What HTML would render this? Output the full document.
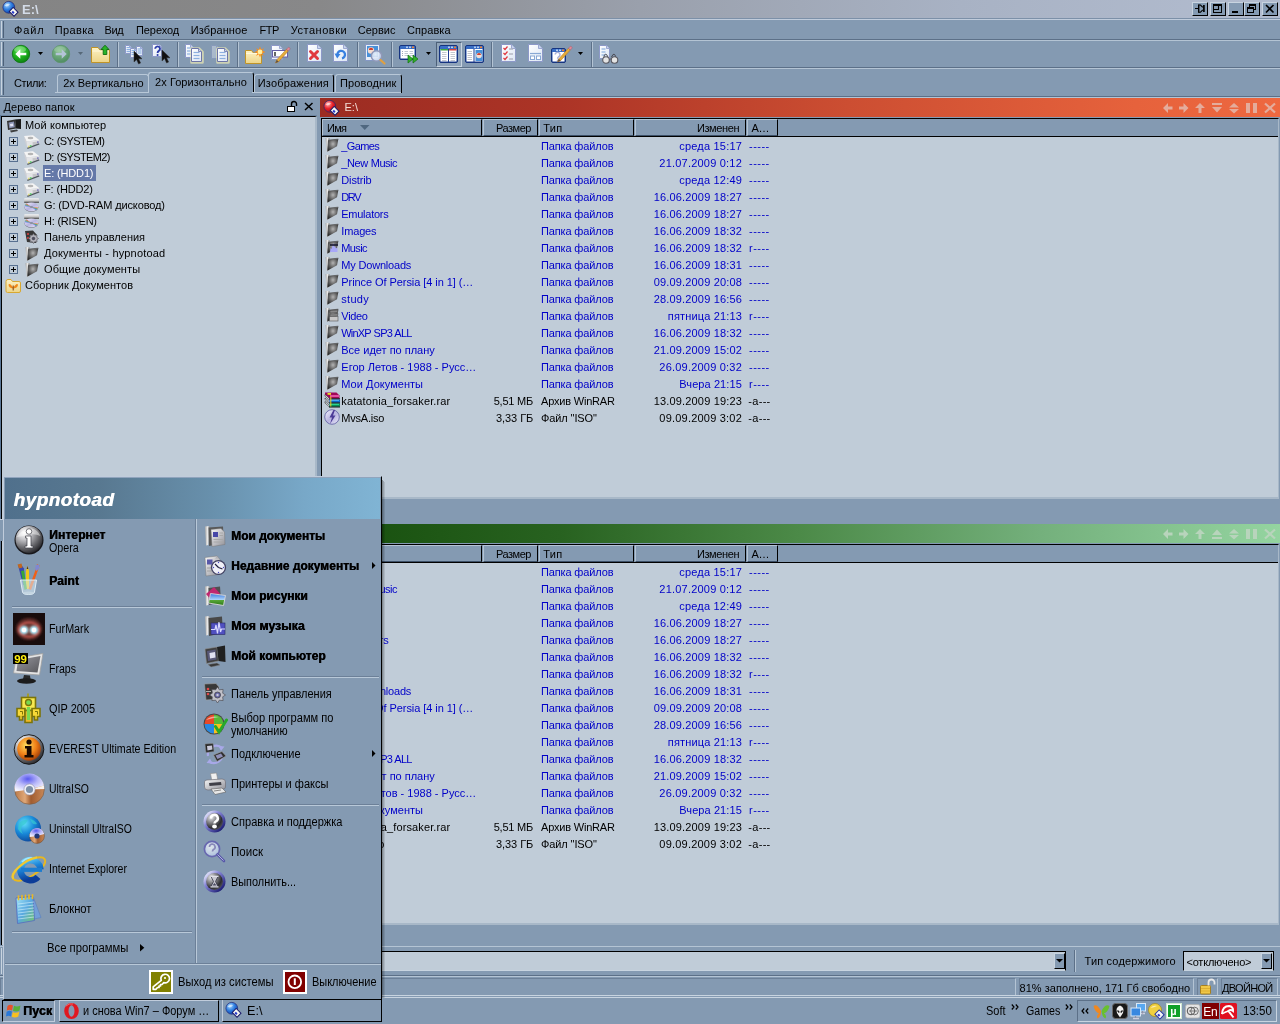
<!DOCTYPE html><html><head><meta charset="utf-8"><title>E:\</title><style>
html,body{margin:0;padding:0}
body{width:1280px;height:1024px;overflow:hidden;background:#849ab2;font-family:"Liberation Sans",sans-serif;font-size:11px;color:#000;position:relative}
div,span{box-sizing:border-box}
.a{position:absolute}
.t{position:absolute;white-space:nowrap;line-height:13px;height:13px}
.hl{position:absolute;height:1px;left:0;width:1280px}
.bl{color:#0000c8}
.r{text-align:right}
.b{font-weight:bold}
svg{position:absolute;overflow:visible}
</style></head><body><div id="w" style="position:absolute;left:0;top:0;width:1280px;height:1024px;will-change:transform">
<div class="a" style="left:0px;top:0px;width:1280px;height:18px;background:linear-gradient(90deg,#848484 0%,#888889 25%,#9aa0ac 50%,#a8b2c4 75%,#b2bccf 100%);"></div>
<div class="t b" style="left:22px;top:2px;font-size:13px;color:#d4dce8;line-height:15px;height:15px;">E:\</div>
<div class="a" style="left:1192px;top:2px;width:16px;height:14px;background:#849ab2;border-top:1px solid #c8d4e0;border-left:1px solid #c8d4e0;border-right:1px solid #000;border-bottom:1px solid #000"></div>
<div class="a" style="left:1210px;top:2px;width:16px;height:14px;background:#849ab2;border-top:1px solid #c8d4e0;border-left:1px solid #c8d4e0;border-right:1px solid #000;border-bottom:1px solid #000"></div>
<div class="a" style="left:1228px;top:2px;width:16px;height:14px;background:#849ab2;border-top:1px solid #c8d4e0;border-left:1px solid #c8d4e0;border-right:1px solid #000;border-bottom:1px solid #000"></div>
<div class="a" style="left:1244px;top:2px;width:16px;height:14px;background:#849ab2;border-top:1px solid #c8d4e0;border-left:1px solid #c8d4e0;border-right:1px solid #000;border-bottom:1px solid #000"></div>
<div class="a" style="left:1262px;top:2px;width:16px;height:14px;background:#849ab2;border-top:1px solid #c8d4e0;border-left:1px solid #c8d4e0;border-right:1px solid #000;border-bottom:1px solid #000"></div>
<div class="a" style="left:0px;top:18px;width:1280px;height:1px;background:#7c90a8;"></div>
<div class="a" style="left:0px;top:19px;width:1280px;height:1px;background:#c0ccdc;"></div>
<div class="a" style="left:0px;top:39px;width:1280px;height:1px;background:#5c7088;"></div>
<div class="a" style="left:0px;top:40px;width:1280px;height:1px;background:#b4c4d4;"></div>
<div class="a" style="left:0px;top:67px;width:1280px;height:1px;background:#5c7088;"></div>
<div class="a" style="left:0px;top:68px;width:1280px;height:1px;background:#b4c4d4;"></div>
<div class="a" style="left:0px;top:96px;width:1280px;height:1px;background:#5c7088;"></div>
<div class="a" style="left:0px;top:97px;width:1280px;height:1px;background:#b4c4d4;"></div>
<div class="a" style="left:1px;top:21px;width:1px;height:17px;background:#c8d4e0;"></div>
<div class="a" style="left:3px;top:21px;width:1px;height:17px;background:#4c6078;"></div>
<div class="a" style="left:1px;top:42px;width:1px;height:24px;background:#c8d4e0;"></div>
<div class="a" style="left:3px;top:42px;width:1px;height:24px;background:#4c6078;"></div>
<div class="a" style="left:1px;top:70px;width:1px;height:25px;background:#c8d4e0;"></div>
<div class="a" style="left:3px;top:70px;width:1px;height:25px;background:#4c6078;"></div>
<div class="t " style="left:14.0px;top:24px;letter-spacing:0.90px;">Файл</div>
<div class="t " style="left:54.7px;top:24px;letter-spacing:0.37px;">Правка</div>
<div class="t " style="left:104.5px;top:24px;letter-spacing:-0.33px;">Вид</div>
<div class="t " style="left:136.0px;top:24px;letter-spacing:-0.08px;">Переход</div>
<div class="t " style="left:190.7px;top:24px;letter-spacing:0.12px;">Избранное</div>
<div class="t " style="left:259.5px;top:24px;letter-spacing:-0.52px;">FTP</div>
<div class="t " style="left:290.7px;top:24px;letter-spacing:0.53px;">Установки</div>
<div class="t " style="left:357.7px;top:24px;letter-spacing:0.02px;">Сервис</div>
<div class="t " style="left:407.0px;top:24px;letter-spacing:0.06px;">Справка</div>
<div class="t " style="left:14px;top:77px;letter-spacing:-0.40px;">Стили:</div>
<div class="t " style="left:63.2px;top:77px;letter-spacing:-0.02px;">2x Вертикально</div>
<div class="t " style="left:155px;top:76px;letter-spacing:0.07px;">2x Горизонтально</div>
<div class="t " style="left:257.7px;top:77px;letter-spacing:0.19px;">Изображения</div>
<div class="t " style="left:340px;top:77px;letter-spacing:0.13px;">Проводник</div>
<svg width="0" height="0" style="left:0;top:0"><defs>
<radialGradient id="gGreen" cx="0.4" cy="0.3" r="0.75"><stop offset="0" stop-color="#58e050"/><stop offset="0.55" stop-color="#1eb01e"/><stop offset="1" stop-color="#0c7c10"/></radialGradient>
<radialGradient id="gGreenD" cx="0.4" cy="0.3" r="0.75"><stop offset="0" stop-color="#86c08e"/><stop offset="0.6" stop-color="#64a074"/><stop offset="1" stop-color="#4c8860"/></radialGradient>
<linearGradient id="gFold" x1="0" y1="0" x2="0" y2="1"><stop offset="0" stop-color="#fdf2c4"/><stop offset="1" stop-color="#ecd488"/></linearGradient>
<linearGradient id="gPage" x1="0" y1="0" x2="1" y2="1"><stop offset="0" stop-color="#ffffff"/><stop offset="1" stop-color="#dce6f4"/></linearGradient>
<linearGradient id="gWin" x1="0" y1="0" x2="0" y2="1"><stop offset="0" stop-color="#3c74cc"/><stop offset="1" stop-color="#1c3c90"/></linearGradient>
<linearGradient id="gPencil" x1="0" y1="0" x2="1" y2="1"><stop offset="0" stop-color="#f8d060"/><stop offset="1" stop-color="#d08818"/></linearGradient>
<radialGradient id="gLens" cx="0.4" cy="0.35" r="0.7"><stop offset="0" stop-color="#ffffff"/><stop offset="1" stop-color="#b8ccec"/></radialGradient>
<radialGradient id="gBlueBall" cx="0.35" cy="0.3" r="0.8"><stop offset="0" stop-color="#a8d8ff"/><stop offset="0.5" stop-color="#2c7ce0"/><stop offset="1" stop-color="#0c3ca0"/></radialGradient>
<radialGradient id="gRedBall" cx="0.35" cy="0.3" r="0.8"><stop offset="0" stop-color="#ffb0b0"/><stop offset="0.5" stop-color="#e82028"/><stop offset="1" stop-color="#a00810"/></radialGradient>
<linearGradient id="gDarkFold" x1="0" y1="0" x2="1" y2="1"><stop offset="0" stop-color="#d0d0d0"/><stop offset="0.45" stop-color="#707070"/><stop offset="1" stop-color="#282828"/></linearGradient>
<radialGradient id="gChrome" cx="0.4" cy="0.3" r="0.8"><stop offset="0" stop-color="#ffffff"/><stop offset="0.5" stop-color="#b0b0b8"/><stop offset="1" stop-color="#303038"/></radialGradient>
<radialGradient id="gOrangeBall" cx="0.4" cy="0.35" r="0.8"><stop offset="0" stop-color="#ffe060"/><stop offset="0.5" stop-color="#f08018"/><stop offset="1" stop-color="#802000"/></radialGradient>
<radialGradient id="gPurpBall" cx="0.4" cy="0.3" r="0.8"><stop offset="0" stop-color="#f0f0ff"/><stop offset="0.5" stop-color="#8080c0"/><stop offset="1" stop-color="#202060"/></radialGradient>
</defs></svg>
<svg style="left:11px;top:44px" width="20" height="20" viewBox="0 0 20 20" ><circle cx="10" cy="10" r="8.7" fill="url(#gGreen)" stroke="#0c7410" stroke-width="0.8"/><ellipse cx="9" cy="5.5" rx="6" ry="3.2" fill="#fff" opacity="0.28"/><path d="M4.300 10L9.300 5.200V8.700H15.300V11.300H9.300V14.800Z" fill="#fff"/></svg>
<svg style="left:38px;top:52px" width="5" height="3" viewBox="0 0 5 3" ><path d="M0 0H5L2.5 3Z" fill="#000"/></svg>
<svg style="left:51px;top:44px" width="20" height="20" viewBox="0 0 20 20" ><circle cx="10" cy="10" r="8.7" fill="url(#gGreenD)" stroke="#5c9468" stroke-width="0.8"/><ellipse cx="9" cy="5.5" rx="6" ry="3.2" fill="#fff" opacity="0.18"/><path d="M15.700 10L10.700 5.200V8.700H4.700V11.300H10.700V14.800Z" fill="#b4c4d8"/></svg>
<svg style="left:78px;top:52px" width="5" height="3" viewBox="0 0 5 3" ><path d="M0 0H5L2.5 3Z" fill="#566878"/></svg>
<svg style="left:90px;top:44px" width="22" height="20" viewBox="0 0 22 20" ><path d="M1.500 3.500H8L10 6H19.500V18.500H1.500Z" fill="url(#gFold)" stroke="#c09428" stroke-width="1"/><path d="M2.500 7H19" stroke="#fff8dc" stroke-width="1"/><path d="M15 1.2L19 5.5H16.800V10.500H13.200V5.500H11Z" fill="#28b428" stroke="#0c6c10" stroke-width="0.9"/></svg>
<div class="a" style="left:117px;top:42px;width:1px;height:25px;background:#5c7088;"></div>
<div class="a" style="left:118px;top:42px;width:1px;height:25px;background:#b4c4d4;"></div>
<svg style="left:124px;top:44px" width="22" height="20" viewBox="0 0 22 20" ><g opacity="1"><path d="M1.5 1.5H5.5L7.5 3.5V9.5H1.5Z" fill="url(#gPage)" stroke="#8c98c8"/><path d="M5.5 1.5V3.5H7.5" fill="#c8d4ec" stroke="#8c98c8" stroke-width="0.8"/></g><path d="M2.5 3.5h4" stroke="#8cb0e0" stroke-width="1.2"/><path d="M2.5 5.5h4" stroke="#8cb0e0" stroke-width="1.2"/><path d="M2.5 7.5h4" stroke="#8cb0e0" stroke-width="1.2"/><g opacity="1"><path d="M12.5 2.5H16.5L18.5 4.5V11.5H12.5Z" fill="url(#gPage)" stroke="#8c98c8"/><path d="M16.5 2.5V4.5H18.5" fill="#c8d4ec" stroke="#8c98c8" stroke-width="0.8"/></g><path d="M13.5 5h4" stroke="#8cb0e0" stroke-width="1.2"/><path d="M13.5 7h4" stroke="#8cb0e0" stroke-width="1.2"/><path d="M13.5 9h4" stroke="#8cb0e0" stroke-width="1.2"/><g opacity="1"><path d="M6.5 4.5H10.5L12.5 6.5V13.5H6.5Z" fill="url(#gPage)" stroke="#8c98c8"/><path d="M10.5 4.5V6.5H12.5" fill="#c8d4ec" stroke="#8c98c8" stroke-width="0.8"/></g><path d="M7.5 6.5h4" stroke="#8cb0e0" stroke-width="1.2"/><path d="M7.5 8.5h4" stroke="#8cb0e0" stroke-width="1.2"/><path d="M7.5 10.5h4" stroke="#8cb0e0" stroke-width="1.2"/><g transform="translate(10,7)"><path d="M0 0V11L2.6 8.6L4.6 13L6.6 12L4.6 7.8H8Z" fill="#101010" stroke="#303030" stroke-width="0.5"/></g></svg>
<svg style="left:151px;top:44px" width="22" height="20" viewBox="0 0 22 20" ><g opacity="1"><path d="M1.5 0.5H8.5L10.5 2.5V12.5H1.5Z" fill="url(#gPage)" stroke="#8c98c8"/><path d="M8.5 0.5V2.5H10.5" fill="#c8d4ec" stroke="#8c98c8" stroke-width="0.8"/></g><path d="M4.2 4.8a2.400 2.400 0 1 1 3.600 2.100q-1.200 0.700 -1.200 2.100" fill="none" stroke="#2c3ca8" stroke-width="1.9"/><circle cx="6.6" cy="11" r="1.05" fill="#2c3ca8"/><g transform="translate(11,6)"><path d="M0 0V11L2.6 8.6L4.6 13L6.6 12L4.6 7.8H8Z" fill="#101010" stroke="#303030" stroke-width="0.5"/></g></svg>
<div class="a" style="left:177px;top:42px;width:1px;height:25px;background:#5c7088;"></div>
<div class="a" style="left:178px;top:42px;width:1px;height:25px;background:#b4c4d4;"></div>
<svg style="left:184px;top:44px" width="24" height="21" viewBox="0 0 24 21" ><g opacity="1"><path d="M1.5 0.5H6.5L9.5 3.5V13.5H1.5Z" fill="url(#gPage)" stroke="#8c98c8"/><path d="M6.5 0.5V3.5H9.5" fill="#c8d4ec" stroke="#8c98c8" stroke-width="0.8"/></g><path d="M3 4h4" stroke="#8cb0e0" stroke-width="1.2"/><path d="M3 7h4" stroke="#8cb0e0" stroke-width="1.2"/><path d="M3 10h4" stroke="#8cb0e0" stroke-width="1.2"/><path d="M7.500 4.500H15L18.500 8V18.500H7.500Z" fill="none" stroke="#f4f0b4" stroke-width="2.600" stroke-linejoin="round" opacity="0.650"/><g opacity="1"><path d="M7.5 4.5H14.5L17.5 7.5V17.5H7.5Z" fill="url(#gPage)" stroke="#6c74a8"/><path d="M14.5 4.5V7.5H17.5" fill="#c8d4ec" stroke="#6c74a8" stroke-width="0.8"/></g><path d="M9.5 8.5h6" stroke="#8cb0e0" stroke-width="1.2"/><path d="M9.5 11.5h6" stroke="#8cb0e0" stroke-width="1.2"/><path d="M9.5 14.5h6" stroke="#8cb0e0" stroke-width="1.2"/></svg>
<svg style="left:210px;top:44px" width="24" height="21" viewBox="0 0 24 21" ><g opacity="0.35"><path d="M1.5 1.5H6.5L9.5 4.5V14.5H1.5Z" fill="url(#gPage)" stroke="#8c98c8"/><path d="M6.5 1.5V4.5H9.5" fill="#c8d4ec" stroke="#8c98c8" stroke-width="0.8"/></g><path d="M7.500 4.500H15L18.500 8V18.500H7.500Z" fill="none" stroke="#f4f0b4" stroke-width="2.600" stroke-linejoin="round" opacity="0.650"/><g opacity="1"><path d="M7.5 4.5H14.5L17.5 7.5V17.5H7.5Z" fill="url(#gPage)" stroke="#6c74a8"/><path d="M14.5 4.5V7.5H17.5" fill="#c8d4ec" stroke="#6c74a8" stroke-width="0.8"/></g><path d="M9.5 8.5h6" stroke="#8cb0e0" stroke-width="1.2"/><path d="M9.5 11.5h6" stroke="#8cb0e0" stroke-width="1.2"/><path d="M9.5 14.5h6" stroke="#8cb0e0" stroke-width="1.2"/></svg>
<div class="a" style="left:237px;top:42px;width:1px;height:25px;background:#5c7088;"></div>
<div class="a" style="left:238px;top:42px;width:1px;height:25px;background:#b4c4d4;"></div>
<svg style="left:244px;top:45px" width="24" height="20" viewBox="0 0 24 20" ><path d="M1.5 5.5H7.5L9.5 8H17.5V18.5H1.5Z" fill="url(#gFold)" stroke="#c09428"/><path d="M2 8.5H17" stroke="#fff8dc"/><g transform="translate(16,7)"><path d="M0 -5.5L1.2 -2.2L4 -4L2.4 -1.2L5.5 0L2.4 1.2L4 4L1.2 2.2L0 5.5L-1.2 2.2L-4 4L-2.4 1.2L-5.5 0L-2.4 -1.2L-4 -4L-1.2 -2.2Z" fill="#f88c18"/><circle r="2.4" fill="#fff0a0"/></g></svg>
<svg style="left:270px;top:44px" width="24" height="21" viewBox="0 0 24 21" ><g opacity="1"><path d="M1.5 1.5H9.5L12.5 4.5V15.5H1.5Z" fill="url(#gPage)" stroke="#8c98c8"/><path d="M9.5 1.5V4.5H12.5" fill="#c8d4ec" stroke="#8c98c8" stroke-width="0.8"/></g><rect x="2.500" y="6.500" width="15" height="6.500" fill="#fff" stroke="#6860a8" stroke-width="1"/><path d="M5 8v4" stroke="#000" stroke-width="1.2"/><path d="M5.500 19L6.800 15.800L16.500 5.200L18.300 7L8.600 17.700Z" fill="url(#gPencil)" stroke="#b07018" stroke-width="0.500"/><path d="M16.500 5.200L17.800 3.800A1.300 1.300 0 0 1 19.700 5.600L18.300 7Z" fill="#e08898" stroke="#a05060" stroke-width="0.400"/><path d="M5.500 19L6.800 15.800L8.600 17.700Z" fill="#605040"/></svg>
<div class="a" style="left:297px;top:42px;width:1px;height:25px;background:#5c7088;"></div>
<div class="a" style="left:298px;top:42px;width:1px;height:25px;background:#b4c4d4;"></div>
<svg style="left:306px;top:43px" width="18" height="21" viewBox="0 0 18 21" ><g opacity="1"><path d="M1.5 1.5H11.5L15.5 5.5V18.5H1.5Z" fill="url(#gPage)" stroke="#8c98c8"/><path d="M11.5 1.5V5.5H15.5" fill="#c8d4ec" stroke="#8c98c8" stroke-width="0.8"/></g><path d="M4.500 8.500L11.500 15.500M11.500 8.500L4.500 15.500" stroke="#e03840" stroke-width="3" stroke-linecap="round"/></svg>
<svg style="left:332px;top:43px" width="18" height="21" viewBox="0 0 18 21" ><g opacity="1"><path d="M1.5 1.5H11.5L15.5 5.5V18.5H1.5Z" fill="url(#gPage)" stroke="#8c98c8"/><path d="M11.5 1.5V5.5H15.5" fill="#c8d4ec" stroke="#8c98c8" stroke-width="0.8"/></g><path d="M5.500 12.500A3.800 3.800 0 1 1 10 15.300" fill="none" stroke="#3880e0" stroke-width="2.300"/><path d="M2.500 10.500L8.500 11L5.200 15.500Z" fill="#3880e0"/></svg>
<div class="a" style="left:357px;top:42px;width:1px;height:25px;background:#5c7088;"></div>
<div class="a" style="left:358px;top:42px;width:1px;height:25px;background:#b4c4d4;"></div>
<svg style="left:364px;top:43px" width="24" height="23" viewBox="0 0 24 23" ><rect x="1.500" y="1.500" width="14" height="16" fill="#e8eef8" stroke="#8498c4"/><rect x="3" y="3" width="11" height="11" fill="#4890d8"/><circle cx="7" cy="7.500" r="3.200" fill="#f4dcd0"/><path d="M4.800 7a2.200 2.200 0 0 1 4.400 0" fill="#d04030"/><circle cx="12.500" cy="13" r="5.200" fill="url(#gLens)" fill-opacity="0.85" stroke="#9098b8" stroke-width="1.500"/><path d="M16.500 17L20.500 20.500" stroke="#e0a040" stroke-width="2.200" stroke-linecap="round"/></svg>
<div class="a" style="left:391px;top:42px;width:1px;height:25px;background:#5c7088;"></div>
<div class="a" style="left:392px;top:42px;width:1px;height:25px;background:#b4c4d4;"></div>
<svg style="left:398px;top:44px" width="22" height="21" viewBox="0 0 22 21" ><rect x="1.5" y="1.5" width="16" height="14" rx="1.5" fill="url(#gWin)" stroke="#163480"/><rect x="2.5" y="5" width="14" height="9.5" fill="#fff"/><rect x="14" y="2.5" width="2" height="1.6" fill="#f08030"/><rect x="11" y="2.5" width="2" height="1.6" fill="#b8d0f0"/><rect x="8" y="2.5" width="2" height="1.6" fill="#b8d0f0"/><path d="M4 7.5h1" stroke="#a0a8b8" stroke-width="1"/><path d="M4 9.5h1" stroke="#a0a8b8" stroke-width="1"/><path d="M4 11.5h1" stroke="#a0a8b8" stroke-width="1"/><path d="M6.5 7.5h3.5" stroke="#c0c8d4" stroke-width="1"/><path d="M6.5 9.5h3.5" stroke="#c0c8d4" stroke-width="1"/><path d="M6.5 11.5h3.5" stroke="#c0c8d4" stroke-width="1"/><path d="M11.5 7.5h3.5" stroke="#c0c8d4" stroke-width="1"/><path d="M11.5 9.5h3.5" stroke="#c0c8d4" stroke-width="1"/><path d="M11.5 11.5h3.5" stroke="#c0c8d4" stroke-width="1"/><path d="M10 11L15 15L10 19Z M15 11L20 15L15 19Z" fill="#30b028" stroke="#107010" stroke-width="0.7"/></svg>
<svg style="left:426px;top:52px" width="5" height="3" viewBox="0 0 5 3" ><path d="M0 0H5L2.5 3Z" fill="#000"/></svg>
<div class="a" style="left:436px;top:42px;width:26px;height:25px;background:#90a4ba;border:1px solid #4c6078;border-right-color:#c8d4e0;border-bottom-color:#c8d4e0"></div>
<svg style="left:438px;top:44px" width="22" height="21" viewBox="0 0 22 21" ><rect x="1.5" y="1.5" width="18" height="17" rx="1.5" fill="url(#gWin)" stroke="#163480"/><rect x="2.5" y="5" width="16" height="12.5" fill="#fff"/><rect x="16" y="2.5" width="2" height="1.6" fill="#f08030"/><rect x="13" y="2.5" width="2" height="1.6" fill="#b8d0f0"/><rect x="10" y="2.5" width="2" height="1.6" fill="#b8d0f0"/><rect x="2.5" y="5" width="7.5" height="1.5" fill="#40a840"/><rect x="11" y="5" width="7.5" height="1.5" fill="#d84040"/><rect x="10" y="5" width="1" height="13" fill="#1c3c90"/><path d="M4 8.5h4.5" stroke="#c4c8d0" stroke-width="1"/><path d="M4 10.5h4.5" stroke="#c4c8d0" stroke-width="1"/><path d="M4 12.5h4.5" stroke="#c4c8d0" stroke-width="1"/><path d="M4 14.5h4.5" stroke="#c4c8d0" stroke-width="1"/><path d="M4 16.5h4.5" stroke="#c4c8d0" stroke-width="1"/><path d="M12.5 8.5h4.5" stroke="#c4c8d0" stroke-width="1"/><path d="M12.5 10.5h4.5" stroke="#c4c8d0" stroke-width="1"/><path d="M12.5 12.5h4.5" stroke="#c4c8d0" stroke-width="1"/><path d="M12.5 14.5h4.5" stroke="#c4c8d0" stroke-width="1"/><path d="M12.5 16.5h4.5" stroke="#c4c8d0" stroke-width="1"/></svg>
<svg style="left:464px;top:44px" width="22" height="21" viewBox="0 0 22 21" ><rect x="1.5" y="1.5" width="18" height="17" rx="1.5" fill="url(#gWin)" stroke="#163480"/><rect x="2.5" y="5" width="16" height="12.5" fill="#fff"/><rect x="16" y="2.5" width="2" height="1.6" fill="#f08030"/><rect x="13" y="2.5" width="2" height="1.6" fill="#b8d0f0"/><rect x="10" y="2.5" width="2" height="1.6" fill="#b8d0f0"/><rect x="9.5" y="5" width="1" height="13" fill="#1c3c90"/><path d="M3.5 7.5h4.5" stroke="#c0c4cc" stroke-width="1"/><path d="M3.5 9.5h4.5" stroke="#c0c4cc" stroke-width="1"/><path d="M3.5 11.5h4.5" stroke="#c0c4cc" stroke-width="1"/><path d="M3.5 13.5h4.5" stroke="#c0c4cc" stroke-width="1"/><path d="M3.5 15.5h4.5" stroke="#c0c4cc" stroke-width="1"/><rect x="11.5" y="6" width="7" height="11" fill="#4890d8"/><circle cx="15" cy="11.5" r="2.8" fill="#f4e0d8"/><path d="M13 11a2 2 0 0 1 4 0" fill="#d04030"/></svg>
<div class="a" style="left:491px;top:42px;width:1px;height:25px;background:#5c7088;"></div>
<div class="a" style="left:492px;top:42px;width:1px;height:25px;background:#b4c4d4;"></div>
<svg style="left:500px;top:43px" width="18" height="21" viewBox="0 0 18 21" ><g opacity="1"><path d="M1.5 1.5H11.5L15.5 5.5V18.5H1.5Z" fill="url(#gPage)" stroke="#8c98c8"/><path d="M11.5 1.5V5.5H15.5" fill="#c8d4ec" stroke="#8c98c8" stroke-width="0.8"/></g><path d="M3.5 5L5 6.5L7.5 3.5M3.5 10L5 11.5L7.5 8.5M3.5 15L5 16.5L7.5 13.5" fill="none" stroke="#e03840" stroke-width="1.200"/><path d="M9 6h4" stroke="#b0b4c0" stroke-width="1.4"/><path d="M9 11h4" stroke="#b0b4c0" stroke-width="1.4"/><path d="M9 16h4" stroke="#b0b4c0" stroke-width="1.4"/></svg>
<svg style="left:527px;top:43px" width="18" height="21" viewBox="0 0 18 21" ><g opacity="1"><path d="M1.5 1.5H11.5L15.5 5.5V18.5H1.5Z" fill="url(#gPage)" stroke="#8c98c8"/><path d="M11.5 1.5V5.5H15.5" fill="#c8d4ec" stroke="#8c98c8" stroke-width="0.8"/></g><path d="M3 10.5H14" stroke="#88a8d4" stroke-width="1.2"/><rect x="3.5" y="13" width="4" height="3.5" fill="#fff" stroke="#88a8d4"/><rect x="9.5" y="13" width="4" height="3.5" fill="#fff" stroke="#88a8d4"/></svg>
<svg style="left:550px;top:45px" width="24" height="20" viewBox="0 0 24 20" ><rect x="1.5" y="3.5" width="14" height="14" rx="1.5" fill="url(#gWin)" stroke="#163480"/><rect x="2.5" y="7" width="12" height="9.5" fill="#fff"/><rect x="12" y="4.5" width="2" height="1.6" fill="#f08030"/><rect x="9" y="4.5" width="2" height="1.6" fill="#b8d0f0"/><rect x="6" y="4.5" width="2" height="1.6" fill="#b8d0f0"/><path d="M5.2 9.6a2.400 2.400 0 1 1 3.600 2.100q-1.200 0.700 -1.200 2.100" fill="none" stroke="#a8b0d8" stroke-width="1.5"/><circle cx="7.6" cy="15.5" r="0.9" fill="#a8b0d8"/><path d="M7.500 17L8.800 13.800L18.500 3.200L20.300 5L10.600 15.700Z" fill="url(#gPencil)" stroke="#b07018" stroke-width="0.500"/><path d="M18.500 3.200L19.800 1.800A1.300 1.300 0 0 1 21.700 3.600L20.300 5Z" fill="#e08898" stroke="#a05060" stroke-width="0.400"/><path d="M7.500 17L8.800 13.800L10.600 15.700Z" fill="#605040"/></svg>
<svg style="left:578px;top:52px" width="5" height="3" viewBox="0 0 5 3" ><path d="M0 0H5L2.5 3Z" fill="#000"/></svg>
<div class="a" style="left:591px;top:42px;width:1px;height:25px;background:#5c7088;"></div>
<div class="a" style="left:592px;top:42px;width:1px;height:25px;background:#b4c4d4;"></div>
<svg style="left:598px;top:44px" width="22" height="21" viewBox="0 0 22 21" ><g opacity="1"><path d="M1.5 1.5H8.5L11.5 4.5V14.5H1.5Z" fill="url(#gPage)" stroke="#8c98c8"/><path d="M8.5 1.5V4.5H11.5" fill="#c8d4ec" stroke="#8c98c8" stroke-width="0.8"/></g><path d="M3.5 5h4" stroke="#8cb0e0" stroke-width="1.2"/><path d="M3.5 8h4" stroke="#8cb0e0" stroke-width="1.2"/><path d="M3.5 11h4" stroke="#8cb0e0" stroke-width="1.2"/><path d="M6 13.500Q6 9.500 8.500 10.500L10 13M17.500 13.500Q17.500 9.500 15 10.500L13.500 13" fill="none" stroke="#484850" stroke-width="1"/><circle cx="8" cy="16" r="3.300" fill="#e4e4e4" stroke="#585860" stroke-width="1.100"/><circle cx="16.500" cy="16" r="3.300" fill="#e4e4e4" stroke="#585860" stroke-width="1.100"/><path d="M11 15.500Q12.300 14.500 13.500 15.500" fill="none" stroke="#585860" stroke-width="0.900"/></svg>
<div class="t " style="left:3.5px;top:101px;letter-spacing:0.12px;">Дерево папок</div>
<div class="a" style="left:0px;top:115px;width:1px;height:830px;background:#5c7898;"></div>
<div class="a" style="left:1px;top:115px;width:316px;height:1px;background:#6c84a0;"></div>
<div class="a" style="left:1px;top:116px;width:316px;height:829px;background:#c0ccd8;border-top:1px solid #000;border-left:1px solid #000;border-right:2px solid #a8b8c8"></div>
<div class="t " style="left:25px;top:119px;letter-spacing:0.08px;">Мой компьютер</div>
<div class="t " style="left:44px;top:135px;letter-spacing:-0.62px;word-spacing:0.62px;">C: (SYSTEM)</div>
<div class="a" style="left:9px;top:137px;width:9px;height:9px;background:#c0ccd8;border:1px solid #587090"></div>
<div class="a" style="left:11px;top:141px;width:5px;height:1px;background:#000;"></div>
<div class="a" style="left:13px;top:139px;width:1px;height:5px;background:#000;"></div>
<div class="t " style="left:44px;top:151px;letter-spacing:-0.62px;word-spacing:0.62px;">D: (SYSTEM2)</div>
<div class="a" style="left:9px;top:153px;width:9px;height:9px;background:#c0ccd8;border:1px solid #587090"></div>
<div class="a" style="left:11px;top:157px;width:5px;height:1px;background:#000;"></div>
<div class="a" style="left:13px;top:155px;width:1px;height:5px;background:#000;"></div>
<div class="a" style="left:43px;top:165px;width:53px;height:16px;background:#6478a8;"></div>
<div class="t " style="left:44px;top:167px;color:#fff;letter-spacing:-0.15px;">E: (HDD1)</div>
<div class="a" style="left:9px;top:169px;width:9px;height:9px;background:#c0ccd8;border:1px solid #587090"></div>
<div class="a" style="left:11px;top:173px;width:5px;height:1px;background:#000;"></div>
<div class="a" style="left:13px;top:171px;width:1px;height:5px;background:#000;"></div>
<div class="t " style="left:44px;top:183px;letter-spacing:-0.14px;">F: (HDD2)</div>
<div class="a" style="left:9px;top:185px;width:9px;height:9px;background:#c0ccd8;border:1px solid #587090"></div>
<div class="a" style="left:11px;top:189px;width:5px;height:1px;background:#000;"></div>
<div class="a" style="left:13px;top:187px;width:1px;height:5px;background:#000;"></div>
<div class="t " style="left:44px;top:199px;letter-spacing:-0.13px;">G: (DVD-RAM дисковод)</div>
<div class="a" style="left:9px;top:201px;width:9px;height:9px;background:#c0ccd8;border:1px solid #587090"></div>
<div class="a" style="left:11px;top:205px;width:5px;height:1px;background:#000;"></div>
<div class="a" style="left:13px;top:203px;width:1px;height:5px;background:#000;"></div>
<div class="t " style="left:44px;top:215px;letter-spacing:-0.22px;">H: (RISEN)</div>
<div class="a" style="left:9px;top:217px;width:9px;height:9px;background:#c0ccd8;border:1px solid #587090"></div>
<div class="a" style="left:11px;top:221px;width:5px;height:1px;background:#000;"></div>
<div class="a" style="left:13px;top:219px;width:1px;height:5px;background:#000;"></div>
<div class="t " style="left:44px;top:231px;letter-spacing:-0.00px;">Панель управления</div>
<div class="a" style="left:9px;top:233px;width:9px;height:9px;background:#c0ccd8;border:1px solid #587090"></div>
<div class="a" style="left:11px;top:237px;width:5px;height:1px;background:#000;"></div>
<div class="a" style="left:13px;top:235px;width:1px;height:5px;background:#000;"></div>
<div class="t " style="left:44px;top:247px;letter-spacing:0.16px;">Документы - hypnotoad</div>
<div class="a" style="left:9px;top:249px;width:9px;height:9px;background:#c0ccd8;border:1px solid #587090"></div>
<div class="a" style="left:11px;top:253px;width:5px;height:1px;background:#000;"></div>
<div class="a" style="left:13px;top:251px;width:1px;height:5px;background:#000;"></div>
<div class="t " style="left:44px;top:263px;letter-spacing:0.09px;">Общие документы</div>
<div class="a" style="left:9px;top:265px;width:9px;height:9px;background:#c0ccd8;border:1px solid #587090"></div>
<div class="a" style="left:11px;top:269px;width:5px;height:1px;background:#000;"></div>
<div class="a" style="left:13px;top:267px;width:1px;height:5px;background:#000;"></div>
<div class="t " style="left:25px;top:279px;letter-spacing:0.05px;">Сборник Документов</div>
<div class="a" style="left:320px;top:98px;width:960px;height:19px;background:linear-gradient(90deg,#9c2c22 0%,#ac3426 25%,#cc4e32 55%,#e6623c 85%,#ee6840 100%);"></div>
<div class="t " style="left:344.5px;top:101px;color:#f4e0d8;">E:\</div>
<div class="a" style="left:321px;top:118px;width:958px;height:381px;background:#c0ccd8;border-top:1px solid #000;border-left:1px solid #000;border-right:1px solid #a8b8c8;border-bottom:2px solid #a8b8c8"></div>
<div class="a" style="left:322px;top:119px;width:956px;height:17px;background:#849ab2;"></div>
<div class="a" style="left:322px;top:136px;width:956px;height:1px;background:#000;"></div>
<div class="a" style="left:322px;top:119px;width:160px;height:17px;background:#849ab2;border-top:1px solid #b4c4d4;border-left:1px solid #b4c4d4;border-right:1px solid #000;border-bottom:1px solid #3c5068"></div>
<div class="a" style="left:483px;top:119px;width:55px;height:17px;background:#849ab2;border-top:1px solid #b4c4d4;border-left:1px solid #b4c4d4;border-right:1px solid #000;border-bottom:1px solid #3c5068"></div>
<div class="a" style="left:539px;top:119px;width:95px;height:17px;background:#849ab2;border-top:1px solid #b4c4d4;border-left:1px solid #b4c4d4;border-right:1px solid #000;border-bottom:1px solid #3c5068"></div>
<div class="a" style="left:635px;top:119px;width:111px;height:17px;background:#849ab2;border-top:1px solid #b4c4d4;border-left:1px solid #b4c4d4;border-right:1px solid #000;border-bottom:1px solid #3c5068"></div>
<div class="a" style="left:747px;top:119px;width:31px;height:17px;background:#849ab2;border-top:1px solid #b4c4d4;border-left:1px solid #b4c4d4;border-right:1px solid #000;border-bottom:1px solid #3c5068"></div>
<div class="t " style="left:327px;top:122px;letter-spacing:-0.72px;">Имя</div>
<div class="t r " style="right:748.96px;top:122px;letter-spacing:-0.46px;">Размер</div>
<div class="t " style="left:543.3px;top:122px;letter-spacing:0.33px;">Тип</div>
<div class="t r " style="right:540.88px;top:122px;letter-spacing:-0.38px;">Изменен</div>
<div class="t " style="left:751.5px;top:122px;letter-spacing:-0.34px;">А…</div>
<div class="t bl" style="left:341.3px;top:140px;letter-spacing:-0.62px;">_Games</div>
<div class="t bl" style="left:541px;top:140px;letter-spacing:-0.14px;">Папка файлов</div>
<div class="t r bl" style="right:538.01px;top:140px;letter-spacing:0.19px;">среда 15:17</div>
<div class="t bl" style="left:749px;top:140px;letter-spacing:0.49px;">-----</div>
<div class="t bl" style="left:341.3px;top:157px;letter-spacing:-0.45px;word-spacing:0.45px;">_New Music</div>
<div class="t bl" style="left:541px;top:157px;letter-spacing:-0.14px;">Папка файлов</div>
<div class="t r bl" style="right:537.99px;top:157px;letter-spacing:0.21px;">21.07.2009 0:12</div>
<div class="t bl" style="left:749px;top:157px;letter-spacing:0.49px;">-----</div>
<div class="t bl" style="left:341.3px;top:174px;letter-spacing:-0.15px;">Distrib</div>
<div class="t bl" style="left:541px;top:174px;letter-spacing:-0.14px;">Папка файлов</div>
<div class="t r bl" style="right:538.01px;top:174px;letter-spacing:0.19px;">среда 12:49</div>
<div class="t bl" style="left:749px;top:174px;letter-spacing:0.49px;">-----</div>
<div class="t bl" style="left:341.3px;top:191px;letter-spacing:-1.37px;">DRV</div>
<div class="t bl" style="left:541px;top:191px;letter-spacing:-0.14px;">Папка файлов</div>
<div class="t r bl" style="right:538.04px;top:191px;letter-spacing:0.16px;">16.06.2009 18:27</div>
<div class="t bl" style="left:749px;top:191px;letter-spacing:0.49px;">-----</div>
<div class="t bl" style="left:341.3px;top:208px;letter-spacing:-0.27px;">Emulators</div>
<div class="t bl" style="left:541px;top:208px;letter-spacing:-0.14px;">Папка файлов</div>
<div class="t r bl" style="right:538.04px;top:208px;letter-spacing:0.16px;">16.06.2009 18:27</div>
<div class="t bl" style="left:749px;top:208px;letter-spacing:0.49px;">-----</div>
<div class="t bl" style="left:341.3px;top:225px;letter-spacing:-0.16px;">Images</div>
<div class="t bl" style="left:541px;top:225px;letter-spacing:-0.14px;">Папка файлов</div>
<div class="t r bl" style="right:538.04px;top:225px;letter-spacing:0.16px;">16.06.2009 18:32</div>
<div class="t bl" style="left:749px;top:225px;letter-spacing:0.49px;">-----</div>
<div class="t bl" style="left:341.3px;top:242px;letter-spacing:-0.61px;">Music</div>
<div class="t bl" style="left:541px;top:242px;letter-spacing:-0.14px;">Папка файлов</div>
<div class="t r bl" style="right:538.04px;top:242px;letter-spacing:0.16px;">16.06.2009 18:32</div>
<div class="t bl" style="left:749px;top:242px;letter-spacing:0.49px;">r----</div>
<div class="t bl" style="left:341.3px;top:259px;letter-spacing:-0.19px;">My Downloads</div>
<div class="t bl" style="left:541px;top:259px;letter-spacing:-0.14px;">Папка файлов</div>
<div class="t r bl" style="right:538.04px;top:259px;letter-spacing:0.16px;">16.06.2009 18:31</div>
<div class="t bl" style="left:749px;top:259px;letter-spacing:0.49px;">-----</div>
<div class="t bl" style="left:341.3px;top:276px;letter-spacing:-0.07px;">Prince Of Persia [4 in 1] (…</div>
<div class="t bl" style="left:541px;top:276px;letter-spacing:-0.14px;">Папка файлов</div>
<div class="t r bl" style="right:538.04px;top:276px;letter-spacing:0.16px;">09.09.2009 20:08</div>
<div class="t bl" style="left:749px;top:276px;letter-spacing:0.49px;">-----</div>
<div class="t bl" style="left:341.3px;top:293px;letter-spacing:0.30px;">study</div>
<div class="t bl" style="left:541px;top:293px;letter-spacing:-0.14px;">Папка файлов</div>
<div class="t r bl" style="right:538.04px;top:293px;letter-spacing:0.16px;">28.09.2009 16:56</div>
<div class="t bl" style="left:749px;top:293px;letter-spacing:0.49px;">-----</div>
<div class="t bl" style="left:341.3px;top:310px;letter-spacing:-0.31px;">Video</div>
<div class="t bl" style="left:541px;top:310px;letter-spacing:-0.14px;">Папка файлов</div>
<div class="t r bl" style="right:538.05px;top:310px;letter-spacing:0.15px;">пятница 21:13</div>
<div class="t bl" style="left:749px;top:310px;letter-spacing:0.49px;">r----</div>
<div class="t bl" style="left:341.3px;top:327px;letter-spacing:-0.83px;word-spacing:0.83px;">WinXP SP3 ALL</div>
<div class="t bl" style="left:541px;top:327px;letter-spacing:-0.14px;">Папка файлов</div>
<div class="t r bl" style="right:538.04px;top:327px;letter-spacing:0.16px;">16.06.2009 18:32</div>
<div class="t bl" style="left:749px;top:327px;letter-spacing:0.49px;">-----</div>
<div class="t bl" style="left:341.3px;top:344px;letter-spacing:-0.01px;">Все идет по плану</div>
<div class="t bl" style="left:541px;top:344px;letter-spacing:-0.14px;">Папка файлов</div>
<div class="t r bl" style="right:538.04px;top:344px;letter-spacing:0.16px;">21.09.2009 15:02</div>
<div class="t bl" style="left:749px;top:344px;letter-spacing:0.49px;">-----</div>
<div class="t bl" style="left:341.3px;top:361px;letter-spacing:0.00px;">Егор Летов - 1988 - Русс…</div>
<div class="t bl" style="left:541px;top:361px;letter-spacing:-0.14px;">Папка файлов</div>
<div class="t r bl" style="right:537.99px;top:361px;letter-spacing:0.21px;">26.09.2009 0:32</div>
<div class="t bl" style="left:749px;top:361px;letter-spacing:0.49px;">-----</div>
<div class="t bl" style="left:341.3px;top:378px;letter-spacing:0.03px;">Мои Документы</div>
<div class="t bl" style="left:541px;top:378px;letter-spacing:-0.14px;">Папка файлов</div>
<div class="t r bl" style="right:538.11px;top:378px;letter-spacing:0.09px;">Вчера 21:15</div>
<div class="t bl" style="left:749px;top:378px;letter-spacing:0.49px;">r----</div>
<div class="t " style="left:341.3px;top:395px;letter-spacing:0.12px;">katatonia_forsaker.rar</div>
<div class="t r " style="right:746.91px;top:395px;letter-spacing:-0.21px;">5,51 МБ</div>
<div class="t " style="left:541px;top:395px;letter-spacing:-0.19px;">Архив WinRAR</div>
<div class="t r " style="right:538.04px;top:395px;letter-spacing:0.16px;">13.09.2009 19:23</div>
<div class="t " style="left:748.3px;top:395px;letter-spacing:0.30px;">-a---</div>
<div class="t " style="left:341.3px;top:412px;letter-spacing:-0.23px;">MvsA.iso</div>
<div class="t r " style="right:746.74px;top:412px;letter-spacing:-0.04px;">3,33 ГБ</div>
<div class="t " style="left:541px;top:412px;letter-spacing:-0.10px;">Файл "ISO"</div>
<div class="t r " style="right:537.99px;top:412px;letter-spacing:0.21px;">09.09.2009 3:02</div>
<div class="t " style="left:748.3px;top:412px;letter-spacing:0.30px;">-a---</div>
<div class="a" style="left:320px;top:524px;width:960px;height:19px;background:linear-gradient(90deg,#164e0c 0%,#286220 25%,#4c8a48 50%,#74b07c 75%,#94d4a0 100%);"></div>
<div class="a" style="left:321px;top:544px;width:958px;height:381px;background:#c0ccd8;border-top:1px solid #000;border-left:1px solid #000;border-right:1px solid #a8b8c8;border-bottom:2px solid #a8b8c8"></div>
<div class="a" style="left:322px;top:545px;width:956px;height:17px;background:#849ab2;"></div>
<div class="a" style="left:322px;top:562px;width:956px;height:1px;background:#000;"></div>
<div class="a" style="left:322px;top:545px;width:160px;height:17px;background:#849ab2;border-top:1px solid #b4c4d4;border-left:1px solid #b4c4d4;border-right:1px solid #000;border-bottom:1px solid #3c5068"></div>
<div class="a" style="left:483px;top:545px;width:55px;height:17px;background:#849ab2;border-top:1px solid #b4c4d4;border-left:1px solid #b4c4d4;border-right:1px solid #000;border-bottom:1px solid #3c5068"></div>
<div class="a" style="left:539px;top:545px;width:95px;height:17px;background:#849ab2;border-top:1px solid #b4c4d4;border-left:1px solid #b4c4d4;border-right:1px solid #000;border-bottom:1px solid #3c5068"></div>
<div class="a" style="left:635px;top:545px;width:111px;height:17px;background:#849ab2;border-top:1px solid #b4c4d4;border-left:1px solid #b4c4d4;border-right:1px solid #000;border-bottom:1px solid #3c5068"></div>
<div class="a" style="left:747px;top:545px;width:31px;height:17px;background:#849ab2;border-top:1px solid #b4c4d4;border-left:1px solid #b4c4d4;border-right:1px solid #000;border-bottom:1px solid #3c5068"></div>
<div class="t " style="left:327px;top:548px;letter-spacing:-0.72px;">Имя</div>
<div class="t r " style="right:748.96px;top:548px;letter-spacing:-0.46px;">Размер</div>
<div class="t " style="left:543.3px;top:548px;letter-spacing:0.33px;">Тип</div>
<div class="t r " style="right:540.88px;top:548px;letter-spacing:-0.38px;">Изменен</div>
<div class="t " style="left:751.5px;top:548px;letter-spacing:-0.34px;">А…</div>
<div class="t bl" style="left:341.3px;top:566px;letter-spacing:-0.62px;">_Games</div>
<div class="t bl" style="left:541px;top:566px;letter-spacing:-0.14px;">Папка файлов</div>
<div class="t r bl" style="right:538.01px;top:566px;letter-spacing:0.19px;">среда 15:17</div>
<div class="t bl" style="left:749px;top:566px;letter-spacing:0.49px;">-----</div>
<div class="t bl" style="left:341.3px;top:583px;letter-spacing:-0.45px;word-spacing:0.45px;">_New Music</div>
<div class="t bl" style="left:541px;top:583px;letter-spacing:-0.14px;">Папка файлов</div>
<div class="t r bl" style="right:537.99px;top:583px;letter-spacing:0.21px;">21.07.2009 0:12</div>
<div class="t bl" style="left:749px;top:583px;letter-spacing:0.49px;">-----</div>
<div class="t bl" style="left:341.3px;top:600px;letter-spacing:-0.15px;">Distrib</div>
<div class="t bl" style="left:541px;top:600px;letter-spacing:-0.14px;">Папка файлов</div>
<div class="t r bl" style="right:538.01px;top:600px;letter-spacing:0.19px;">среда 12:49</div>
<div class="t bl" style="left:749px;top:600px;letter-spacing:0.49px;">-----</div>
<div class="t bl" style="left:341.3px;top:617px;letter-spacing:-1.37px;">DRV</div>
<div class="t bl" style="left:541px;top:617px;letter-spacing:-0.14px;">Папка файлов</div>
<div class="t r bl" style="right:538.04px;top:617px;letter-spacing:0.16px;">16.06.2009 18:27</div>
<div class="t bl" style="left:749px;top:617px;letter-spacing:0.49px;">-----</div>
<div class="t bl" style="left:341.3px;top:634px;letter-spacing:-0.27px;">Emulators</div>
<div class="t bl" style="left:541px;top:634px;letter-spacing:-0.14px;">Папка файлов</div>
<div class="t r bl" style="right:538.04px;top:634px;letter-spacing:0.16px;">16.06.2009 18:27</div>
<div class="t bl" style="left:749px;top:634px;letter-spacing:0.49px;">-----</div>
<div class="t bl" style="left:341.3px;top:651px;letter-spacing:-0.16px;">Images</div>
<div class="t bl" style="left:541px;top:651px;letter-spacing:-0.14px;">Папка файлов</div>
<div class="t r bl" style="right:538.04px;top:651px;letter-spacing:0.16px;">16.06.2009 18:32</div>
<div class="t bl" style="left:749px;top:651px;letter-spacing:0.49px;">-----</div>
<div class="t bl" style="left:341.3px;top:668px;letter-spacing:-0.61px;">Music</div>
<div class="t bl" style="left:541px;top:668px;letter-spacing:-0.14px;">Папка файлов</div>
<div class="t r bl" style="right:538.04px;top:668px;letter-spacing:0.16px;">16.06.2009 18:32</div>
<div class="t bl" style="left:749px;top:668px;letter-spacing:0.49px;">r----</div>
<div class="t bl" style="left:341.3px;top:685px;letter-spacing:-0.19px;">My Downloads</div>
<div class="t bl" style="left:541px;top:685px;letter-spacing:-0.14px;">Папка файлов</div>
<div class="t r bl" style="right:538.04px;top:685px;letter-spacing:0.16px;">16.06.2009 18:31</div>
<div class="t bl" style="left:749px;top:685px;letter-spacing:0.49px;">-----</div>
<div class="t bl" style="left:341.3px;top:702px;letter-spacing:-0.07px;">Prince Of Persia [4 in 1] (…</div>
<div class="t bl" style="left:541px;top:702px;letter-spacing:-0.14px;">Папка файлов</div>
<div class="t r bl" style="right:538.04px;top:702px;letter-spacing:0.16px;">09.09.2009 20:08</div>
<div class="t bl" style="left:749px;top:702px;letter-spacing:0.49px;">-----</div>
<div class="t bl" style="left:341.3px;top:719px;letter-spacing:0.30px;">study</div>
<div class="t bl" style="left:541px;top:719px;letter-spacing:-0.14px;">Папка файлов</div>
<div class="t r bl" style="right:538.04px;top:719px;letter-spacing:0.16px;">28.09.2009 16:56</div>
<div class="t bl" style="left:749px;top:719px;letter-spacing:0.49px;">-----</div>
<div class="t bl" style="left:341.3px;top:736px;letter-spacing:-0.31px;">Video</div>
<div class="t bl" style="left:541px;top:736px;letter-spacing:-0.14px;">Папка файлов</div>
<div class="t r bl" style="right:538.05px;top:736px;letter-spacing:0.15px;">пятница 21:13</div>
<div class="t bl" style="left:749px;top:736px;letter-spacing:0.49px;">r----</div>
<div class="t bl" style="left:341.3px;top:753px;letter-spacing:-0.83px;word-spacing:0.83px;">WinXP SP3 ALL</div>
<div class="t bl" style="left:541px;top:753px;letter-spacing:-0.14px;">Папка файлов</div>
<div class="t r bl" style="right:538.04px;top:753px;letter-spacing:0.16px;">16.06.2009 18:32</div>
<div class="t bl" style="left:749px;top:753px;letter-spacing:0.49px;">-----</div>
<div class="t bl" style="left:341.3px;top:770px;letter-spacing:-0.01px;">Все идет по плану</div>
<div class="t bl" style="left:541px;top:770px;letter-spacing:-0.14px;">Папка файлов</div>
<div class="t r bl" style="right:538.04px;top:770px;letter-spacing:0.16px;">21.09.2009 15:02</div>
<div class="t bl" style="left:749px;top:770px;letter-spacing:0.49px;">-----</div>
<div class="t bl" style="left:341.3px;top:787px;letter-spacing:0.00px;">Егор Летов - 1988 - Русс…</div>
<div class="t bl" style="left:541px;top:787px;letter-spacing:-0.14px;">Папка файлов</div>
<div class="t r bl" style="right:537.99px;top:787px;letter-spacing:0.21px;">26.09.2009 0:32</div>
<div class="t bl" style="left:749px;top:787px;letter-spacing:0.49px;">-----</div>
<div class="t bl" style="left:341.3px;top:804px;letter-spacing:0.03px;">Мои Документы</div>
<div class="t bl" style="left:541px;top:804px;letter-spacing:-0.14px;">Папка файлов</div>
<div class="t r bl" style="right:538.11px;top:804px;letter-spacing:0.09px;">Вчера 21:15</div>
<div class="t bl" style="left:749px;top:804px;letter-spacing:0.49px;">r----</div>
<div class="t " style="left:341.3px;top:821px;letter-spacing:0.12px;">katatonia_forsaker.rar</div>
<div class="t r " style="right:746.91px;top:821px;letter-spacing:-0.21px;">5,51 МБ</div>
<div class="t " style="left:541px;top:821px;letter-spacing:-0.19px;">Архив WinRAR</div>
<div class="t r " style="right:538.04px;top:821px;letter-spacing:0.16px;">13.09.2009 19:23</div>
<div class="t " style="left:748.3px;top:821px;letter-spacing:0.30px;">-a---</div>
<div class="t " style="left:341.3px;top:838px;letter-spacing:-0.23px;">MvsA.iso</div>
<div class="t r " style="right:746.74px;top:838px;letter-spacing:-0.04px;">3,33 ГБ</div>
<div class="t " style="left:541px;top:838px;letter-spacing:-0.10px;">Файл "ISO"</div>
<div class="t r " style="right:537.99px;top:838px;letter-spacing:0.21px;">09.09.2009 3:02</div>
<div class="t " style="left:748.3px;top:838px;letter-spacing:0.30px;">-a---</div>
<svg style="left:2px;top:1px" width="18" height="16" viewBox="0 0 18 16" ><circle cx="6.8" cy="6.3" r="5.9" fill="url(#gBlueBall)" stroke="#202878" stroke-width="0.7"/><path d="M2.5 4.5Q5 2 8 3Q7 5 4.5 5.5Z" fill="#fff" opacity="0.55"/><g transform="translate(11.6,10.8) rotate(45)"><rect x="-3.4" y="-2.8" width="6.8" height="5.6" fill="#f4f4f0" stroke="#181868" stroke-width="1"/><rect x="-1.2" y="-0.2" width="2.4" height="2" fill="#2838c8"/></g></svg>
<svg style="left:1192px;top:2px" width="16" height="14" viewBox="0 0 16 14" ><path d="M3 6.500H6.500" stroke="#000" stroke-width="1"/><path d="M6.700 2.500V10.700" stroke="#000" stroke-width="1.400"/><path d="M6.500 3H8.500L10.800 5.300M6.500 10.200H8.500L10.800 7.900" stroke="#000" stroke-width="1.100" fill="none"/><path d="M11.900 3V10" stroke="#000" stroke-width="1.700"/></svg>
<svg style="left:1210px;top:2px" width="16" height="14" viewBox="0 0 16 14" ><rect x="3.500" y="2.500" width="8" height="8" fill="none" stroke="#000"/><path d="M3 3H12" stroke="#000" stroke-width="2"/><path d="M3.500 7.500H8.500V4" stroke="#000" fill="none" stroke-width="1.100"/></svg>
<svg style="left:1228px;top:2px" width="16" height="14" viewBox="0 0 16 14" ><rect x="4" y="9" width="6" height="2" fill="#000"/></svg>
<svg style="left:1244px;top:2px" width="16" height="14" viewBox="0 0 16 14" ><rect x="5.5" y="2.5" width="6" height="5" fill="none" stroke="#000"/><path d="M5 3H12" stroke="#000" stroke-width="2"/><rect x="3.500" y="5.5" width="6" height="5" fill="#849ab2" stroke="#000"/><path d="M3 6H10" stroke="#000" stroke-width="2"/></svg>
<svg style="left:1262px;top:2px" width="16" height="14" viewBox="0 0 16 14" ><path d="M4 3L11.5 10.5M11.5 3L4 10.5" stroke="#000" stroke-width="1.6"/></svg>
<div class="a" style="left:57px;top:74px;width:92px;height:19px;border-top:1px solid #b8c8d8;border-left:1px solid #b8c8d8;border-right:1px solid #b8c8d8;border-radius:3px 3px 0 0"></div>
<div class="a" style="left:55px;top:92px;width:93px;height:1px;background:#b8c8d8;"></div>
<div class="a" style="left:148px;top:72px;width:106px;height:21px;border-top:1px solid #b8c8d8;border-left:1px solid #b8c8d8;border-right:1px solid #000;border-radius:3px 3px 0 0"></div>
<div class="a" style="left:254px;top:74px;width:80px;height:19px;border-top:1px solid #b8c8d8;border-left:1px solid #b8c8d8;border-right:1px solid #000;border-radius:3px 3px 0 0"></div>
<div class="a" style="left:252px;top:92px;width:81px;height:1px;background:#b8c8d8;"></div>
<div class="a" style="left:335px;top:74px;width:67px;height:19px;border-top:1px solid #b8c8d8;border-left:1px solid #b8c8d8;border-right:1px solid #000;border-radius:3px 3px 0 0"></div>
<div class="a" style="left:333px;top:92px;width:68px;height:1px;background:#b8c8d8;"></div>
<svg style="left:286px;top:101px" width="12" height="12" viewBox="0 0 12 12" ><rect x="1.500" y="5.5" width="7" height="5" fill="#fff" stroke="#000"/><path d="M5.5 5.5V3A2.5 2.5 0 0 1 10.500 3V5" fill="none" stroke="#000" stroke-width="1.4"/></svg>
<svg style="left:304px;top:102px" width="10" height="9" viewBox="0 0 10 9" ><path d="M1 1L8.500 8M8.500 1L1 8" stroke="#000" stroke-width="1.5"/></svg>
<svg style="left:323px;top:100px" width="18" height="16" viewBox="0 0 18 16" ><circle cx="6.8" cy="6.3" r="5.9" fill="url(#gRedBall)" stroke="#202878" stroke-width="0.7"/><path d="M2.5 4.5Q5 2 8 3Q7 5 4.5 5.5Z" fill="#fff" opacity="0.55"/><g transform="translate(11.6,10.8) rotate(45)"><rect x="-3.4" y="-2.8" width="6.8" height="5.6" fill="#f4f4f0" stroke="#181868" stroke-width="1"/><rect x="-1.2" y="-0.2" width="2.4" height="2" fill="#2838c8"/></g></svg>
<svg style="left:1163px;top:103px" width="114" height="11" viewBox="0 0 114 11" ><g fill="#e4ac9c"><path d="M0 5L5 0V3.5H9.500V6.500H5V10Z"/><path d="M25.5 5L20.5 0V3.5H16V6.500H20.5V10Z"/><path d="M37 0L42 5H38.5V10H35.5V5H32Z"/><path d="M49 0H59V2H49Z M49 4H59L54 9.500Z"/><path d="M66 4.500L71 0L76 4.500Z M66 6L71 10.500L76 6Z"/><path d="M83 0H87V10H83Z M90 0H94V10H90Z"/></g><path d="M102 0.5L112 9.500M112 0.5L102 9.500" stroke="#e4ac9c" stroke-width="2.2"/></svg>
<svg style="left:1163px;top:529px" width="114" height="11" viewBox="0 0 114 11" ><g fill="#b8d4bc"><path d="M0 5L5 0V3.5H9.500V6.500H5V10Z"/><path d="M25.5 5L20.5 0V3.5H16V6.500H20.5V10Z"/><path d="M37 0L42 5H38.5V10H35.5V5H32Z"/><path d="M49 8H59V10H49Z M49 6H59L54 0.5Z"/><path d="M66 4.500L71 0L76 4.500Z M66 6L71 10.500L76 6Z"/><path d="M83 0H87V10H83Z M90 0H94V10H90Z"/></g><path d="M102 0.5L112 9.500M112 0.5L102 9.500" stroke="#b8d4bc" stroke-width="2.2"/></svg>
<svg style="left:360px;top:125px" width="10" height="5" viewBox="0 0 10 5" ><path d="M0 0H9.500L4.750 5Z" fill="#506880"/></svg>
<svg width="0" height="0" style="left:0;top:0"><defs>
<radialGradient id="gDF" cx="0.52" cy="0.38" r="0.62"><stop offset="0" stop-color="#b4b4b4"/><stop offset="0.5" stop-color="#6c6c6c"/><stop offset="1" stop-color="#2c2c2c"/></radialGradient>
<linearGradient id="gFlap" x1="0" y1="0" x2="1" y2="0"><stop offset="0" stop-color="#a8a8a8"/><stop offset="0.5" stop-color="#e8e8e8"/><stop offset="1" stop-color="#909090"/></linearGradient>
<linearGradient id="gDrive" x1="0" y1="0" x2="0" y2="1"><stop offset="0" stop-color="#f4f4f4"/><stop offset="1" stop-color="#a8a8a8"/></linearGradient>
<linearGradient id="gDisc" x1="0" y1="0" x2="1" y2="1"><stop offset="0" stop-color="#f4f4ff"/><stop offset="0.5" stop-color="#b8b4e0"/><stop offset="1" stop-color="#e8e8f8"/></linearGradient>
</defs></svg>
<svg style="left:325px;top:137px" width="15" height="16" viewBox="0 0 15 16" ><path d="M0.5 1H4.500V2L3.500 14.500L1.800 15Z" fill="url(#gFlap)"/><path d="M3 3.200L13.300 2.200L12 9.300L2.200 14.800Z" fill="url(#gDF)"/><path d="M3 3.200L13.300 2.200" stroke="#585858" stroke-width="0.8"/></svg>
<svg style="left:325px;top:154px" width="15" height="16" viewBox="0 0 15 16" ><path d="M0.5 1H4.500V2L3.500 14.500L1.800 15Z" fill="url(#gFlap)"/><path d="M3 3.200L13.300 2.200L12 9.300L2.200 14.800Z" fill="url(#gDF)"/><path d="M3 3.200L13.300 2.200" stroke="#585858" stroke-width="0.8"/></svg>
<svg style="left:325px;top:171px" width="15" height="16" viewBox="0 0 15 16" ><path d="M0.5 1H4.500V2L3.500 14.500L1.800 15Z" fill="url(#gFlap)"/><path d="M3 3.200L13.300 2.200L12 9.300L2.200 14.800Z" fill="url(#gDF)"/><path d="M3 3.200L13.300 2.200" stroke="#585858" stroke-width="0.8"/></svg>
<svg style="left:325px;top:188px" width="15" height="16" viewBox="0 0 15 16" ><path d="M0.5 1H4.500V2L3.500 14.500L1.800 15Z" fill="url(#gFlap)"/><path d="M3 3.200L13.300 2.200L12 9.300L2.200 14.800Z" fill="url(#gDF)"/><path d="M3 3.200L13.300 2.200" stroke="#585858" stroke-width="0.8"/></svg>
<svg style="left:325px;top:205px" width="15" height="16" viewBox="0 0 15 16" ><path d="M0.5 1H4.500V2L3.500 14.500L1.800 15Z" fill="url(#gFlap)"/><path d="M3 3.200L13.300 2.200L12 9.300L2.200 14.800Z" fill="url(#gDF)"/><path d="M3 3.200L13.300 2.200" stroke="#585858" stroke-width="0.8"/></svg>
<svg style="left:325px;top:222px" width="15" height="16" viewBox="0 0 15 16" ><path d="M0.5 1H4.500V2L3.500 14.500L1.800 15Z" fill="url(#gFlap)"/><path d="M3 3.200L13.300 2.200L12 9.300L2.200 14.800Z" fill="url(#gDF)"/><path d="M3 3.200L13.300 2.200" stroke="#585858" stroke-width="0.8"/></svg>
<svg style="left:325px;top:239px" width="15" height="16" viewBox="0 0 15 16" ><path d="M0.5 1H4.500V2L3.500 14.500L1.800 15Z" fill="url(#gFlap)"/><path d="M3 3.200L13.300 2.200L12 9.300L2.200 14.800Z" fill="url(#gDF)"/><path d="M3 3.200L13.300 2.200" stroke="#585858" stroke-width="0.8"/><path d="M5 13L5.500 9L6.500 10L7.500 7L8.200 4L9 8L10 7L11 9.500L12.500 8.500V13Z" fill="#a8a8f8"/><rect x="5" y="5" width="8" height="2" fill="#181830" opacity="0.8"/></svg>
<svg style="left:325px;top:256px" width="15" height="16" viewBox="0 0 15 16" ><path d="M0.5 1H4.500V2L3.500 14.500L1.800 15Z" fill="url(#gFlap)"/><path d="M3 3.200L13.300 2.200L12 9.300L2.200 14.800Z" fill="url(#gDF)"/><path d="M3 3.200L13.300 2.200" stroke="#585858" stroke-width="0.8"/></svg>
<svg style="left:325px;top:273px" width="15" height="16" viewBox="0 0 15 16" ><path d="M0.5 1H4.500V2L3.500 14.500L1.800 15Z" fill="url(#gFlap)"/><path d="M3 3.200L13.300 2.200L12 9.300L2.200 14.800Z" fill="url(#gDF)"/><path d="M3 3.200L13.300 2.200" stroke="#585858" stroke-width="0.8"/></svg>
<svg style="left:325px;top:290px" width="15" height="16" viewBox="0 0 15 16" ><path d="M0.5 1H4.500V2L3.500 14.500L1.800 15Z" fill="url(#gFlap)"/><path d="M3 3.200L13.300 2.200L12 9.300L2.200 14.800Z" fill="url(#gDF)"/><path d="M3 3.200L13.300 2.200" stroke="#585858" stroke-width="0.8"/></svg>
<svg style="left:325px;top:307px" width="15" height="16" viewBox="0 0 15 16" ><path d="M0.5 1H4.500V2L3.500 14.500L1.800 15Z" fill="url(#gFlap)"/><path d="M3 3.200L13.300 2.200L12 9.300L2.200 14.800Z" fill="url(#gDF)"/><path d="M3 3.200L13.300 2.200" stroke="#585858" stroke-width="0.8"/><path d="M5 3.500L13 3L12.500 5.500L5 6Z M5 7L13 6.500L12.500 9L5 9.500Z" fill="#888" stroke="#444" stroke-width="0.5"/><rect x="4.500" y="9.500" width="8.500" height="4.500" fill="#c8c8c8" stroke="#555" stroke-width="0.6"/></svg>
<svg style="left:325px;top:324px" width="15" height="16" viewBox="0 0 15 16" ><path d="M0.5 1H4.500V2L3.500 14.500L1.800 15Z" fill="url(#gFlap)"/><path d="M3 3.200L13.300 2.200L12 9.300L2.200 14.800Z" fill="url(#gDF)"/><path d="M3 3.200L13.300 2.200" stroke="#585858" stroke-width="0.8"/></svg>
<svg style="left:325px;top:341px" width="15" height="16" viewBox="0 0 15 16" ><path d="M0.5 1H4.500V2L3.500 14.500L1.800 15Z" fill="url(#gFlap)"/><path d="M3 3.200L13.300 2.200L12 9.300L2.200 14.800Z" fill="url(#gDF)"/><path d="M3 3.200L13.300 2.200" stroke="#585858" stroke-width="0.8"/></svg>
<svg style="left:325px;top:358px" width="15" height="16" viewBox="0 0 15 16" ><path d="M0.5 1H4.500V2L3.500 14.500L1.800 15Z" fill="url(#gFlap)"/><path d="M3 3.200L13.300 2.200L12 9.300L2.200 14.800Z" fill="url(#gDF)"/><path d="M3 3.200L13.300 2.200" stroke="#585858" stroke-width="0.8"/></svg>
<svg style="left:325px;top:375px" width="15" height="16" viewBox="0 0 15 16" ><path d="M0.5 1H4.500V2L3.500 14.500L1.800 15Z" fill="url(#gFlap)"/><path d="M3 3.200L13.300 2.200L12 9.300L2.200 14.800Z" fill="url(#gDF)"/><path d="M3 3.200L13.300 2.200" stroke="#585858" stroke-width="0.8"/></svg>
<svg style="left:324px;top:392px" width="17" height="16" viewBox="0 0 17 16" ><path d="M1 0.5H12.500L15.500 3.500V6.500H5.500L1 2.500Z" fill="#a00858"/><path d="M6 4H15" stroke="#ff70c0" stroke-width="1.4"/><path d="M1 2.500L5.500 6.500V8L1 4.200Z M1 6L5.500 10V11.500L1 7.500Z M1 9.500L5.500 13.500V15L1 11Z" fill="#fff" stroke="#000" stroke-width="0.5"/><rect x="5.500" y="7.500" width="10.500" height="3.200" fill="#0868c8"/><path d="M6 8.300H15" stroke="#58b8ff" stroke-width="1"/><rect x="5.500" y="11.300" width="10.500" height="3.500" fill="#089058"/><path d="M6 12.200H15" stroke="#38f0a8" stroke-width="1"/><path d="M5.500 6.800H16M5.500 10.900H16M5 15H16" stroke="#000" stroke-width="0.9"/><rect x="6.300" y="4.500" width="1" height="10" fill="#f0d020"/><rect x="3.500" y="1" width="3.500" height="1.800" fill="#e8e020"/></svg>
<svg style="left:324px;top:409px" width="16" height="16" viewBox="0 0 16 16" ><circle cx="8" cy="8" r="7.300" fill="url(#gDisc)" stroke="#6868a8" stroke-width="0.9"/><path d="M9.500 1L5.500 8.500H8L6 15L11.500 6.500H9L11 1Z" fill="#4c3c98"/></svg>
<svg style="left:325px;top:563px" width="15" height="16" viewBox="0 0 15 16" ><path d="M0.5 1H4.500V2L3.500 14.500L1.800 15Z" fill="url(#gFlap)"/><path d="M3 3.200L13.300 2.200L12 9.300L2.200 14.800Z" fill="url(#gDF)"/><path d="M3 3.200L13.300 2.200" stroke="#585858" stroke-width="0.8"/></svg>
<svg style="left:325px;top:580px" width="15" height="16" viewBox="0 0 15 16" ><path d="M0.5 1H4.500V2L3.500 14.500L1.800 15Z" fill="url(#gFlap)"/><path d="M3 3.200L13.300 2.200L12 9.300L2.200 14.800Z" fill="url(#gDF)"/><path d="M3 3.200L13.300 2.200" stroke="#585858" stroke-width="0.8"/></svg>
<svg style="left:325px;top:597px" width="15" height="16" viewBox="0 0 15 16" ><path d="M0.5 1H4.500V2L3.500 14.500L1.800 15Z" fill="url(#gFlap)"/><path d="M3 3.200L13.300 2.200L12 9.300L2.200 14.800Z" fill="url(#gDF)"/><path d="M3 3.200L13.300 2.200" stroke="#585858" stroke-width="0.8"/></svg>
<svg style="left:325px;top:614px" width="15" height="16" viewBox="0 0 15 16" ><path d="M0.5 1H4.500V2L3.500 14.500L1.800 15Z" fill="url(#gFlap)"/><path d="M3 3.200L13.300 2.200L12 9.300L2.200 14.800Z" fill="url(#gDF)"/><path d="M3 3.200L13.300 2.200" stroke="#585858" stroke-width="0.8"/></svg>
<svg style="left:325px;top:631px" width="15" height="16" viewBox="0 0 15 16" ><path d="M0.5 1H4.500V2L3.500 14.500L1.800 15Z" fill="url(#gFlap)"/><path d="M3 3.200L13.300 2.200L12 9.300L2.200 14.800Z" fill="url(#gDF)"/><path d="M3 3.200L13.300 2.200" stroke="#585858" stroke-width="0.8"/></svg>
<svg style="left:325px;top:648px" width="15" height="16" viewBox="0 0 15 16" ><path d="M0.5 1H4.500V2L3.500 14.500L1.800 15Z" fill="url(#gFlap)"/><path d="M3 3.200L13.300 2.200L12 9.300L2.200 14.800Z" fill="url(#gDF)"/><path d="M3 3.200L13.300 2.200" stroke="#585858" stroke-width="0.8"/></svg>
<svg style="left:325px;top:665px" width="15" height="16" viewBox="0 0 15 16" ><path d="M0.5 1H4.500V2L3.500 14.500L1.800 15Z" fill="url(#gFlap)"/><path d="M3 3.200L13.300 2.200L12 9.300L2.200 14.800Z" fill="url(#gDF)"/><path d="M3 3.200L13.300 2.200" stroke="#585858" stroke-width="0.8"/><path d="M5 13L5.500 9L6.500 10L7.500 7L8.200 4L9 8L10 7L11 9.500L12.500 8.500V13Z" fill="#a8a8f8"/><rect x="5" y="5" width="8" height="2" fill="#181830" opacity="0.8"/></svg>
<svg style="left:325px;top:682px" width="15" height="16" viewBox="0 0 15 16" ><path d="M0.5 1H4.500V2L3.500 14.500L1.800 15Z" fill="url(#gFlap)"/><path d="M3 3.200L13.300 2.200L12 9.300L2.200 14.800Z" fill="url(#gDF)"/><path d="M3 3.200L13.300 2.200" stroke="#585858" stroke-width="0.8"/></svg>
<svg style="left:325px;top:699px" width="15" height="16" viewBox="0 0 15 16" ><path d="M0.5 1H4.500V2L3.500 14.500L1.800 15Z" fill="url(#gFlap)"/><path d="M3 3.200L13.300 2.200L12 9.300L2.200 14.800Z" fill="url(#gDF)"/><path d="M3 3.200L13.300 2.200" stroke="#585858" stroke-width="0.8"/></svg>
<svg style="left:325px;top:716px" width="15" height="16" viewBox="0 0 15 16" ><path d="M0.5 1H4.500V2L3.500 14.500L1.800 15Z" fill="url(#gFlap)"/><path d="M3 3.200L13.300 2.200L12 9.300L2.200 14.800Z" fill="url(#gDF)"/><path d="M3 3.200L13.300 2.200" stroke="#585858" stroke-width="0.8"/></svg>
<svg style="left:325px;top:733px" width="15" height="16" viewBox="0 0 15 16" ><path d="M0.5 1H4.500V2L3.500 14.500L1.800 15Z" fill="url(#gFlap)"/><path d="M3 3.200L13.300 2.200L12 9.300L2.200 14.800Z" fill="url(#gDF)"/><path d="M3 3.200L13.300 2.200" stroke="#585858" stroke-width="0.8"/><path d="M5 3.500L13 3L12.500 5.500L5 6Z M5 7L13 6.500L12.500 9L5 9.500Z" fill="#888" stroke="#444" stroke-width="0.5"/><rect x="4.500" y="9.500" width="8.500" height="4.500" fill="#c8c8c8" stroke="#555" stroke-width="0.6"/></svg>
<svg style="left:325px;top:750px" width="15" height="16" viewBox="0 0 15 16" ><path d="M0.5 1H4.500V2L3.500 14.500L1.800 15Z" fill="url(#gFlap)"/><path d="M3 3.200L13.300 2.200L12 9.300L2.200 14.800Z" fill="url(#gDF)"/><path d="M3 3.200L13.300 2.200" stroke="#585858" stroke-width="0.8"/></svg>
<svg style="left:325px;top:767px" width="15" height="16" viewBox="0 0 15 16" ><path d="M0.5 1H4.500V2L3.500 14.500L1.800 15Z" fill="url(#gFlap)"/><path d="M3 3.200L13.300 2.200L12 9.300L2.200 14.800Z" fill="url(#gDF)"/><path d="M3 3.200L13.300 2.200" stroke="#585858" stroke-width="0.8"/></svg>
<svg style="left:325px;top:784px" width="15" height="16" viewBox="0 0 15 16" ><path d="M0.5 1H4.500V2L3.500 14.500L1.800 15Z" fill="url(#gFlap)"/><path d="M3 3.200L13.300 2.200L12 9.300L2.200 14.800Z" fill="url(#gDF)"/><path d="M3 3.200L13.300 2.200" stroke="#585858" stroke-width="0.8"/></svg>
<svg style="left:325px;top:801px" width="15" height="16" viewBox="0 0 15 16" ><path d="M0.5 1H4.500V2L3.500 14.500L1.800 15Z" fill="url(#gFlap)"/><path d="M3 3.200L13.300 2.200L12 9.300L2.200 14.800Z" fill="url(#gDF)"/><path d="M3 3.200L13.300 2.200" stroke="#585858" stroke-width="0.8"/></svg>
<svg style="left:324px;top:818px" width="17" height="16" viewBox="0 0 17 16" ><path d="M1 0.5H12.500L15.500 3.500V6.500H5.500L1 2.500Z" fill="#a00858"/><path d="M6 4H15" stroke="#ff70c0" stroke-width="1.4"/><path d="M1 2.500L5.500 6.500V8L1 4.200Z M1 6L5.500 10V11.500L1 7.500Z M1 9.500L5.500 13.500V15L1 11Z" fill="#fff" stroke="#000" stroke-width="0.5"/><rect x="5.500" y="7.500" width="10.500" height="3.200" fill="#0868c8"/><path d="M6 8.300H15" stroke="#58b8ff" stroke-width="1"/><rect x="5.500" y="11.300" width="10.500" height="3.500" fill="#089058"/><path d="M6 12.200H15" stroke="#38f0a8" stroke-width="1"/><path d="M5.500 6.800H16M5.500 10.900H16M5 15H16" stroke="#000" stroke-width="0.9"/><rect x="6.300" y="4.500" width="1" height="10" fill="#f0d020"/><rect x="3.500" y="1" width="3.500" height="1.800" fill="#e8e020"/></svg>
<svg style="left:324px;top:835px" width="16" height="16" viewBox="0 0 16 16" ><circle cx="8" cy="8" r="7.300" fill="url(#gDisc)" stroke="#6868a8" stroke-width="0.9"/><path d="M9.500 1L5.500 8.500H8L6 15L11.500 6.500H9L11 1Z" fill="#4c3c98"/></svg>
<svg style="left:6px;top:118px" width="16" height="16" viewBox="0 0 16 16" ><path d="M1 3L9 1.500L10 10.500L2 12Z" fill="#303030"/><path d="M9 1.500L15 1L15 11L10 10.500Z" fill="#181818"/><path d="M2.500 4.500L8 3.500L8.800 9.300L3.300 10.300Z" fill="#8890b0"/><path d="M4 6L7 5.500L7.300 8L4.300 8.500Z" fill="#e0e0f0"/><path d="M4 12.500L11 11.500L12 13L5 14.500Z" fill="#404040"/></svg>
<svg style="left:24px;top:134px" width="16" height="16" viewBox="0 0 16 16" ><path d="M0 2L9 1.300L15.200 6L2.500 7.600Z" fill="#f4f4f4"/><path d="M0 2L2.500 7.600L3.300 14.200L0.800 7Z" fill="#d0d0d4"/><path d="M2.500 7.600L15.200 6L15.200 9.600L3.300 14.200Z" fill="#e4e4e6"/><path d="M8.500 8.300L14.800 7.300V9.300L8.800 11.500Z" fill="#c4c4c8"/><ellipse cx="6.500" cy="4" rx="2.900" ry="1.300" fill="#b4b4b4"/><path d="M3.300 14.300L15.200 9.800" stroke="#50585f" stroke-width="1.300"/><rect x="4.200" y="11.800" width="1.200" height="1.600" fill="#e8e060"/><rect x="5.800" y="11.200" width="1.800" height="1.400" fill="#58d068"/><rect x="13.400" y="7.200" width="1" height="1.900" fill="#5858b0"/></svg>
<svg style="left:24px;top:150px" width="16" height="16" viewBox="0 0 16 16" ><path d="M0 2L9 1.300L15.200 6L2.500 7.600Z" fill="#f4f4f4"/><path d="M0 2L2.500 7.600L3.300 14.200L0.800 7Z" fill="#d0d0d4"/><path d="M2.500 7.600L15.200 6L15.200 9.600L3.300 14.200Z" fill="#e4e4e6"/><path d="M8.500 8.300L14.800 7.300V9.300L8.800 11.500Z" fill="#c4c4c8"/><ellipse cx="6.500" cy="4" rx="2.900" ry="1.300" fill="#b4b4b4"/><path d="M3.300 14.300L15.200 9.800" stroke="#50585f" stroke-width="1.300"/><rect x="4.200" y="11.800" width="1.200" height="1.600" fill="#e8e060"/><rect x="5.800" y="11.200" width="1.800" height="1.400" fill="#58d068"/><rect x="13.400" y="7.200" width="1" height="1.900" fill="#5858b0"/></svg>
<svg style="left:24px;top:166px" width="16" height="16" viewBox="0 0 16 16" ><path d="M0 2L9 1.300L15.200 6L2.500 7.600Z" fill="#f4f4f4"/><path d="M0 2L2.500 7.600L3.300 14.200L0.800 7Z" fill="#d0d0d4"/><path d="M2.500 7.600L15.200 6L15.200 9.600L3.300 14.200Z" fill="#e4e4e6"/><path d="M8.500 8.300L14.800 7.300V9.300L8.800 11.500Z" fill="#c4c4c8"/><ellipse cx="6.500" cy="4" rx="2.900" ry="1.300" fill="#b4b4b4"/><path d="M3.300 14.300L15.200 9.800" stroke="#50585f" stroke-width="1.300"/><rect x="4.200" y="11.800" width="1.200" height="1.600" fill="#e8e060"/><rect x="5.800" y="11.200" width="1.800" height="1.400" fill="#58d068"/><rect x="13.400" y="7.200" width="1" height="1.900" fill="#5858b0"/></svg>
<svg style="left:24px;top:182px" width="16" height="16" viewBox="0 0 16 16" ><path d="M0 2L9 1.300L15.200 6L2.500 7.600Z" fill="#f4f4f4"/><path d="M0 2L2.500 7.600L3.300 14.200L0.800 7Z" fill="#d0d0d4"/><path d="M2.500 7.600L15.200 6L15.200 9.600L3.300 14.200Z" fill="#e4e4e6"/><path d="M8.500 8.300L14.800 7.300V9.300L8.800 11.500Z" fill="#c4c4c8"/><ellipse cx="6.500" cy="4" rx="2.900" ry="1.300" fill="#b4b4b4"/><path d="M3.300 14.300L15.200 9.800" stroke="#50585f" stroke-width="1.300"/><rect x="4.200" y="11.800" width="1.200" height="1.600" fill="#e8e060"/><rect x="5.800" y="11.200" width="1.800" height="1.400" fill="#58d068"/><rect x="13.400" y="7.200" width="1" height="1.900" fill="#5858b0"/></svg>
<svg style="left:24px;top:198px" width="16" height="16" viewBox="0 0 16 16" ><path d="M0.800 0.300H14.300Q15 0.300 15 1V4.200H0.200V1Q0.200 0.300 0.800 0.300Z" fill="url(#gDrive)"/><path d="M0.200 4.300H15" stroke="#585858" stroke-width="1.200"/><ellipse cx="7.400" cy="9.300" rx="7" ry="4.400" fill="#70707c"/><ellipse cx="7.400" cy="8.900" rx="7" ry="4.300" fill="url(#gDisc)"/><path d="M7.400 8.900L1.500 6.300L2.600 5.400Z" fill="#e05030" opacity="0.800"/><path d="M7.400 8.900L1 7.200L1.500 6.300Z" fill="#30a840" opacity="0.800"/><path d="M7.400 8.900L0.700 8.200L1 7.200Z" fill="#3858e0" opacity="0.700"/><path d="M7.400 8.900L14.200 9.600L13.800 10.600Z" fill="#f07030" opacity="0.800"/><path d="M7.400 8.900L13.800 10.600L13 11.500Z" fill="#30a840" opacity="0.800"/><path d="M7.400 8.900L13 11.500L12 12.200Z" fill="#3858e0" opacity="0.700"/><ellipse cx="7.400" cy="8.900" rx="1.700" ry="1" fill="#8890a0"/></svg>
<svg style="left:24px;top:214px" width="16" height="16" viewBox="0 0 16 16" ><path d="M0.800 0.300H14.300Q15 0.300 15 1V4.200H0.200V1Q0.200 0.300 0.800 0.300Z" fill="url(#gDrive)"/><path d="M0.200 4.300H15" stroke="#585858" stroke-width="1.200"/><ellipse cx="7.400" cy="9.300" rx="7" ry="4.400" fill="#70707c"/><ellipse cx="7.400" cy="8.900" rx="7" ry="4.300" fill="url(#gDisc)"/><path d="M7.400 8.900L1.500 6.300L2.600 5.400Z" fill="#e05030" opacity="0.800"/><path d="M7.400 8.900L1 7.200L1.500 6.300Z" fill="#30a840" opacity="0.800"/><path d="M7.400 8.900L0.700 8.200L1 7.200Z" fill="#3858e0" opacity="0.700"/><path d="M7.400 8.900L14.200 9.600L13.800 10.600Z" fill="#f07030" opacity="0.800"/><path d="M7.400 8.900L13.800 10.600L13 11.500Z" fill="#30a840" opacity="0.800"/><path d="M7.400 8.900L13 11.500L12 12.200Z" fill="#3858e0" opacity="0.700"/><ellipse cx="7.400" cy="8.900" rx="1.700" ry="1" fill="#8890a0"/></svg>
<svg style="left:24px;top:230px" width="16" height="16" viewBox="0 0 16 16" ><path d="M1 1L9 0.500L13 5L12 13L3 12Z" fill="#383838"/><circle cx="4" cy="4" r="1" fill="#e04040"/><circle cx="4" cy="8" r="1" fill="#e04040"/><g transform="translate(9.500,8.500)"><path d="M0 -5L1.200 -3.300L3.500 -3.500L3.300 -1.200L5 0L3.300 1.200L3.500 3.500L1.200 3.300L0 5L-1.200 3.300L-3.500 3.500L-3.300 1.200L-5 0L-3.300 -1.200L-3.500 -3.500L-1.200 -3.300Z" fill="#b0b0b8" stroke="#505058" stroke-width="0.6"/><circle r="1.700" fill="#505060"/></g></svg>
<svg style="left:25px;top:246px" width="15" height="16" viewBox="0 0 15 16" ><path d="M0.5 1H4.500V2L3.500 14.500L1.800 15Z" fill="url(#gFlap)"/><path d="M3 3.200L13.300 2.200L12 9.300L2.200 14.800Z" fill="url(#gDF)"/><path d="M3 3.200L13.300 2.200" stroke="#585858" stroke-width="0.8"/></svg>
<svg style="left:25px;top:262px" width="15" height="16" viewBox="0 0 15 16" ><path d="M0.5 1H4.500V2L3.500 14.500L1.800 15Z" fill="url(#gFlap)"/><path d="M3 3.200L13.300 2.200L12 9.300L2.200 14.800Z" fill="url(#gDF)"/><path d="M3 3.200L13.300 2.200" stroke="#585858" stroke-width="0.8"/></svg>
<svg style="left:5px;top:278px" width="17" height="16" viewBox="0 0 17 16" ><path d="M1 3.500Q1 1.500 3 1.500H6L7.500 3.500H14Q15.500 3.500 15.500 5V13Q15.500 14.500 14 14.500H2.500Q1 14.500 1 13Z" fill="url(#gFold)" stroke="#d8a830" stroke-width="1"/><path d="M8 9.500Q5 4.500 3.500 6.500Q3.500 10 8 10.500Z M8.500 9.500Q11.500 4.500 13 6.500Q13 10 8.500 10.500Z" fill="#f08818"/><path d="M8.200 7.500V12.500" stroke="#703000" stroke-width="0.9"/></svg>
<div class="a" style="left:0px;top:946px;width:1280px;height:1px;background:#b4c4d4;"></div>
<div class="a" style="left:321px;top:951px;width:745px;height:20px;background:#c0ccd8;border-top:1px solid #000;border-left:1px solid #000;border-right:1px solid #000;border-bottom:1px solid #c8d4e0"></div>
<div class="a" style="left:1054px;top:953px;width:11px;height:16px;background:#849ab2;border:1px solid #000;border-top-color:#c8d4e0;border-left-color:#c8d4e0"></div>
<div class="a" style="left:1px;top:948px;width:1px;height:26px;background:#c8d4e0;"></div>
<div class="a" style="left:3px;top:948px;width:1px;height:26px;background:#4c6078;"></div>
<div class="a" style="left:1074px;top:950px;width:1px;height:22px;background:#5c7088;"></div>
<div class="a" style="left:1075px;top:950px;width:1px;height:22px;background:#b4c4d4;"></div>
<div class="t " style="left:1084.5px;top:955px;letter-spacing:0.17px;">Тип содержимого</div>
<div class="a" style="left:1183px;top:951px;width:91px;height:20px;background:#c0ccd8;border:1px solid #000;border-bottom-color:#c8d4e0"></div>
<div class="t " style="left:1186.5px;top:956px;letter-spacing:-0.22px;">&lt;отключено&gt;</div>
<div class="a" style="left:1261px;top:953px;width:11px;height:16px;background:#849ab2;border:1px solid #000;border-top-color:#c8d4e0;border-left-color:#c8d4e0"></div>
<div class="a" style="left:0px;top:975px;width:1280px;height:1px;background:#5c7088;"></div>
<div class="a" style="left:0px;top:976px;width:1280px;height:1px;background:#b4c4d4;"></div>
<div class="a" style="left:0px;top:978px;width:1016px;height:18px;background:#849ab2;border:1px solid #6c8098;border-right-color:#b4c4d4;border-bottom-color:#b4c4d4"></div>
<div class="a" style="left:1019px;top:978px;width:175px;height:18px;background:#849ab2;border:1px solid #6c8098;border-right-color:#b4c4d4;border-bottom-color:#b4c4d4"></div>
<div class="a" style="left:1197px;top:978px;width:21px;height:18px;background:#849ab2;border:1px solid #6c8098;border-right-color:#b4c4d4;border-bottom-color:#b4c4d4"></div>
<div class="a" style="left:1221px;top:978px;width:57px;height:18px;background:#849ab2;border:1px solid #6c8098;border-right-color:#b4c4d4;border-bottom-color:#b4c4d4"></div>
<div class="t " style="left:1019.5px;top:982px;letter-spacing:0.03px;">81% заполнено, 171 Гб свободно</div>
<div class="t " style="left:1222px;top:982px;letter-spacing:-0.67px;">ДВОЙНОЙ</div>
<div class="a" style="left:0px;top:995px;width:1280px;height:1px;background:#c8d4e0;"></div>
<div class="a" style="left:0px;top:997px;width:1280px;height:1px;background:#c8d4e0;"></div>
<div class="t " style="left:986px;top:1004.5px;font-size:12.5px;transform:scaleX(0.876);transform-origin:0 0;">Soft</div>
<div class="t " style="left:1025.5px;top:1004.5px;font-size:12.5px;transform:scaleX(0.851);transform-origin:0 0;">Games</div>
<div class="a" style="left:1077px;top:1000px;width:200px;height:22px;background:#849ab2;border:1px solid #5c7088;border-right-color:#c8d4e0;border-bottom-color:#c8d4e0"></div>
<div class="t " style="left:1243px;top:1004.5px;font-size:12.5px;transform:scaleX(0.921);transform-origin:0 0;">13:50</div>
<div class="a" style="left:0px;top:519px;width:3px;height:22px;background:#849ab2;"></div>
<div class="a" style="left:0px;top:519px;width:3px;height:1px;background:#c0ccdc;"></div>
<div class="a" style="left:382px;top:480px;width:1px;height:518px;background:rgba(0,0,0,0.32);"></div>
<div class="a" style="left:383px;top:481px;width:1px;height:517px;background:rgba(0,0,0,0.2);"></div>
<div class="a" style="left:384px;top:482px;width:1px;height:516px;background:rgba(0,0,0,0.1);"></div>
<div class="a" style="left:3px;top:476px;width:379px;height:524px;background:#849ab2;border:1px solid #000;border-top-color:#c0ccdc;border-left-color:#c0ccdc"></div>
<div class="a" style="left:4px;top:477px;width:376px;height:1px;background:#90a4bc;"></div>
<div class="a" style="left:5px;top:478px;width:375px;height:41px;background:linear-gradient(90deg,#50708c 0%,#587890 25%,#6890ac 55%,#78a8c8 80%,#80b4d4 100%);"></div>
<div class="t b" style="left:13.5px;top:489px;font-style:italic;font-size:19px;color:#fff;line-height:22px;height:22px;text-shadow:0.4px 0 0 #fff;letter-spacing:0.41px;">hypnotoad</div>
<div class="a" style="left:195px;top:519px;width:1px;height:444px;background:#6c8098;"></div>
<div class="a" style="left:196px;top:519px;width:1px;height:444px;background:#b8c8d8;"></div>
<div class="t b" style="left:49px;top:528.5px;font-size:12.5px;transform:scaleX(0.976);transform-origin:0 0;text-shadow:0.5px 0 0 #000;">Интернет</div>
<div class="t " style="left:49px;top:541.5px;font-size:12.5px;transform:scaleX(0.855);transform-origin:0 0;">Opera</div>
<div class="t b" style="left:49px;top:574.5px;font-size:12.5px;transform:scaleX(0.972);transform-origin:0 0;text-shadow:0.5px 0 0 #000;">Paint</div>
<div class="a" style="left:12px;top:606px;width:180px;height:1px;background:#6c8098;"></div>
<div class="a" style="left:12px;top:607px;width:180px;height:1px;background:#b8c8d8;"></div>
<div class="t " style="left:49px;top:622.5px;font-size:12.5px;transform:scaleX(0.860);transform-origin:0 0;">FurMark</div>
<div class="t " style="left:49px;top:662.5px;font-size:12.5px;transform:scaleX(0.845);transform-origin:0 0;">Fraps</div>
<div class="t " style="left:49px;top:702.5px;font-size:12.5px;transform:scaleX(0.875);transform-origin:0 0;">QIP 2005</div>
<div class="t " style="left:49px;top:742.5px;font-size:12.5px;transform:scaleX(0.852);transform-origin:0 0;">EVEREST Ultimate Edition</div>
<div class="t " style="left:49px;top:782.5px;font-size:12.5px;transform:scaleX(0.834);transform-origin:0 0;">UltraISO</div>
<div class="t " style="left:49px;top:822.5px;font-size:12.5px;transform:scaleX(0.835);transform-origin:0 0;">Uninstall UltraISO</div>
<div class="t " style="left:49px;top:862.5px;font-size:12.5px;transform:scaleX(0.844);transform-origin:0 0;">Internet Explorer</div>
<div class="t " style="left:49px;top:902.5px;font-size:12.5px;transform:scaleX(0.900);transform-origin:0 0;">Блокнот</div>
<div class="a" style="left:12px;top:931px;width:180px;height:1px;background:#6c8098;"></div>
<div class="a" style="left:12px;top:932px;width:180px;height:1px;background:#b8c8d8;"></div>
<div class="t " style="left:47px;top:941.5px;font-size:12.5px;transform:scaleX(0.902);transform-origin:0 0;">Все программы</div>
<div class="t b" style="left:231px;top:529.5px;font-size:12.5px;transform:scaleX(0.956);transform-origin:0 0;text-shadow:0.5px 0 0 #000;">Мои документы</div>
<div class="t b" style="left:231px;top:559.5px;font-size:12.5px;transform:scaleX(0.960);transform-origin:0 0;text-shadow:0.5px 0 0 #000;">Недавние документы</div>
<div class="t b" style="left:231px;top:589.5px;font-size:12.5px;transform:scaleX(0.960);transform-origin:0 0;text-shadow:0.5px 0 0 #000;">Мои рисунки</div>
<div class="t b" style="left:231px;top:619.5px;font-size:12.5px;transform:scaleX(0.985);transform-origin:0 0;text-shadow:0.5px 0 0 #000;">Моя музыка</div>
<div class="t b" style="left:231px;top:649.5px;font-size:12.5px;transform:scaleX(0.961);transform-origin:0 0;text-shadow:0.5px 0 0 #000;">Мой компьютер</div>
<div class="a" style="left:202px;top:676px;width:177px;height:1px;background:#6c8098;"></div>
<div class="a" style="left:202px;top:677px;width:177px;height:1px;background:#b8c8d8;"></div>
<div class="t " style="left:231px;top:687.5px;font-size:12.5px;transform:scaleX(0.877);transform-origin:0 0;">Панель управления</div>
<div class="t " style="left:231px;top:711.5px;font-size:12.5px;transform:scaleX(0.888);transform-origin:0 0;">Выбор программ по</div>
<div class="t " style="left:231px;top:724.5px;font-size:12.5px;transform:scaleX(0.868);transform-origin:0 0;">умолчанию</div>
<div class="t " style="left:231px;top:747.5px;font-size:12.5px;transform:scaleX(0.877);transform-origin:0 0;">Подключение</div>
<div class="t " style="left:231px;top:777.5px;font-size:12.5px;transform:scaleX(0.884);transform-origin:0 0;">Принтеры и факсы</div>
<div class="a" style="left:202px;top:804px;width:177px;height:1px;background:#6c8098;"></div>
<div class="a" style="left:202px;top:805px;width:177px;height:1px;background:#b8c8d8;"></div>
<div class="t " style="left:231px;top:815.5px;font-size:12.5px;transform:scaleX(0.885);transform-origin:0 0;">Справка и поддержка</div>
<div class="t " style="left:231px;top:845.5px;font-size:12.5px;transform:scaleX(0.924);transform-origin:0 0;">Поиск</div>
<div class="t " style="left:231px;top:875.5px;font-size:12.5px;transform:scaleX(0.871);transform-origin:0 0;">Выполнить...</div>
<div class="a" style="left:5px;top:963px;width:376px;height:1px;background:#6c8098;"></div>
<div class="a" style="left:5px;top:964px;width:376px;height:1px;background:#b8c8d8;"></div>
<div class="a" style="left:149px;top:970px;width:24px;height:24px;background:#808000;border:2px solid #fff"></div>
<div class="t " style="left:177.5px;top:975.5px;font-size:12.5px;transform:scaleX(0.895);transform-origin:0 0;">Выход из системы</div>
<div class="a" style="left:283px;top:970px;width:24px;height:24px;background:#800000;border:2px solid #fff"></div>
<div class="t " style="left:311.5px;top:975.5px;font-size:12.5px;transform:scaleX(0.876);transform-origin:0 0;">Выключение</div>
<div class="a" style="left:2px;top:1000px;width:53px;height:22px;background:#849ab2;border:1px solid #000;border-right-color:#c0ccdc;border-bottom-color:#c0ccdc"></div>
<div class="t b" style="left:23px;top:1004.5px;font-size:12.5px;transform:scaleX(1.005);transform-origin:0 0;text-shadow:0.5px 0 0 #000;">Пуск</div>
<div class="a" style="left:59px;top:1000px;width:160px;height:22px;background:#849ab2;border:1px solid #c0ccdc;border-right-color:#000;border-bottom-color:#000"></div>
<div class="t " style="left:83px;top:1004.5px;font-size:12.5px;transform:scaleX(0.878);transform-origin:0 0;">и снова Win7 – Форум …</div>
<div class="a" style="left:222px;top:1000px;width:160px;height:22px;background:#849ab2;border-left:1px solid #c0ccdc;border-right:1px solid #000;border-bottom:1px solid #000"></div>
<div class="t " style="left:247px;top:1004.5px;font-size:12.5px;transform:scaleX(1.013);transform-origin:0 0;">E:\</div>
<svg width="0" height="0" style="left:0;top:0"><defs>
<radialGradient id="gFur" cx="0.5" cy="0.5" r="0.6"><stop offset="0" stop-color="#8c4038"/><stop offset="0.55" stop-color="#3c1c18"/><stop offset="1" stop-color="#140c0c"/></radialGradient>
<radialGradient id="gGlow" cx="0.5" cy="0.5" r="0.5"><stop offset="0" stop-color="#ffffff"/><stop offset="0.4" stop-color="#c0f0ff"/><stop offset="1" stop-color="#80c0e0" stop-opacity="0"/></radialGradient>
<linearGradient id="gCopper" x1="0" y1="0" x2="1" y2="0"><stop offset="0" stop-color="#b87848"/><stop offset="0.35" stop-color="#e0a878"/><stop offset="0.55" stop-color="#a05c30"/><stop offset="1" stop-color="#c88858"/></linearGradient>
<radialGradient id="gLav" cx="0.45" cy="0.3" r="0.7"><stop offset="0" stop-color="#5858f0"/><stop offset="0.5" stop-color="#b8b8f8"/><stop offset="1" stop-color="#f4f4ff"/></radialGradient>
<radialGradient id="gEarth" cx="0.35" cy="0.3" r="0.8"><stop offset="0" stop-color="#60e0f8"/><stop offset="0.5" stop-color="#1888d8"/><stop offset="1" stop-color="#0c3c90"/></radialGradient>
<linearGradient id="gNote" x1="0" y1="0" x2="1" y2="1"><stop offset="0" stop-color="#a8e8f8"/><stop offset="0.5" stop-color="#58a8e0"/><stop offset="1" stop-color="#78c868"/></linearGradient>
<linearGradient id="gSilver" x1="0" y1="0" x2="1" y2="1"><stop offset="0" stop-color="#f8f8f8"/><stop offset="1" stop-color="#909098"/></linearGradient>
<linearGradient id="gScreen" x1="0" y1="0" x2="1" y2="1"><stop offset="0" stop-color="#9898a0"/><stop offset="1" stop-color="#58585c"/></linearGradient>
<linearGradient id="gSky" x1="0" y1="0" x2="0" y2="1"><stop offset="0" stop-color="#3878e0"/><stop offset="0.5" stop-color="#a8d0f8"/><stop offset="0.55" stop-color="#58a838"/><stop offset="1" stop-color="#2c7818"/></linearGradient>
</defs></svg>
<svg width="0" height="0" style="left:0;top:0"><defs><radialGradient id="gChrome2" cx="0.32" cy="0.25" r="0.85"><stop offset="0" stop-color="#ffffff"/><stop offset="0.3" stop-color="#c4c4c8"/><stop offset="0.65" stop-color="#6c6c70"/><stop offset="1" stop-color="#1c1c20"/></radialGradient></defs></svg>
<svg style="left:14px;top:524px" width="31" height="32" viewBox="0 0 31 32" ><circle cx="15" cy="16" r="14.500" fill="#18181c"/><circle cx="15" cy="15.500" r="13.400" fill="url(#gChrome2)"/><path d="M3 13Q8 4 18 4.500Q24 6 26.500 12Q20 9 14 11Q8 12.500 3 13Z" fill="#fff" opacity="0.45"/><circle cx="15" cy="7.500" r="2.800" fill="#fff" stroke="#404048" stroke-width="0.7"/><path d="M11.500 12H17V22H19V24H11V22H13V14H11.500Z" fill="#fff" stroke="#404048" stroke-width="0.7"/></svg>
<svg style="left:15px;top:563px" width="28" height="34" viewBox="0 0 28 34" ><path d="M3 2L6 1.500L9 5.500L10 22H8Z" fill="#3848b0"/><path d="M2.500 1.500L6.500 0.500L7.500 4.500L4 5.500Z" fill="#c06820"/><path d="M12.500 3L14 8V26H11V8Z" fill="#f0c818"/><path d="M12.500 3L13.300 6H11.700Z" fill="#503010"/><path d="M22 1L24.500 2.500L23 7L16 27L13.500 26L20.500 7Z" fill="#f06018"/><path d="M21 2L24 1.500L24.500 5L21.500 8L20 6Z" fill="#8088d0"/><path d="M6 8L9 7.500L12 26L9.500 27Z" fill="#38a838"/><path d="M5.500 17H21.500L19.500 29Q19 31.500 13.500 31.500Q8 31.500 7.500 29Z" fill="#d8ecf8" fill-opacity="0.55" stroke="#e8f4fc" stroke-width="0.9"/><ellipse cx="13.500" cy="30" rx="5.500" ry="1.600" fill="#c8d8e4" opacity="0.8"/></svg>
<svg width="0" height="0" style="left:0;top:0"><defs><filter id="fBlur" x="-30%" y="-30%" width="160%" height="160%"><feGaussianBlur stdDeviation="1.300"/></filter><filter id="fBlur2" x="-30%" y="-30%" width="160%" height="160%"><feGaussianBlur stdDeviation="0.700"/></filter></defs></svg>
<svg style="left:13px;top:613px" width="32" height="32" viewBox="0 0 32 32" ><rect width="32" height="32" fill="#180c0c"/><ellipse cx="16" cy="16" rx="13" ry="11" fill="#5c2c28" filter="url(#fBlur)"/><ellipse cx="16" cy="16.500" rx="10" ry="7" fill="none" stroke="#d06058" stroke-width="2" filter="url(#fBlur)"/><ellipse cx="16" cy="17" rx="4" ry="5" fill="#704038" filter="url(#fBlur)"/><circle cx="11" cy="17" r="4.300" fill="#b8f0ff" filter="url(#fBlur)"/><circle cx="21" cy="17" r="4.300" fill="#b8f0ff" filter="url(#fBlur)"/><circle cx="11" cy="17" r="2.300" fill="#fff" filter="url(#fBlur2)"/><circle cx="21" cy="17" r="2.300" fill="#fff" filter="url(#fBlur2)"/></svg>
<svg style="left:13px;top:653px" width="32" height="32" viewBox="0 0 32 32" ><path d="M3 5L30 0.500L26.500 22L0.500 20Z" fill="#e4e4e4" stroke="#a0a0a0" stroke-width="0.8"/><path d="M5 7L27.500 3L24.500 19.500L3.500 18Z" fill="url(#gScreen)"/><path d="M11 22L17 22.500L17.500 26L10 26Z" fill="#282828"/><ellipse cx="13.500" cy="28" rx="9.500" ry="2.800" fill="#1c1c1c"/><rect x="0" y="0" width="15" height="11" fill="#000"/><text x="1.200" y="9.700" font-family="Liberation Sans" font-weight="bold" font-size="11" fill="#ffee10" textLength="12.800" lengthAdjust="spacingAndGlyphs">99</text></svg>
<svg style="left:16px;top:692px" width="25" height="32" viewBox="0 0 25 32" ><path d="M12 1.500V6" stroke="#a89c10" stroke-width="1.600"/><rect x="5.500" y="5.500" width="14" height="13" fill="#f8e850" stroke="#7c7408" stroke-width="1.600"/><path d="M1 16.500H9V24.500H6.500V28H3.500V24.500H1Z M16 16.500H24V24.500H21.500V28H18.500V24.500H16Z" fill="#f8d838" stroke="#7c7408" stroke-width="1.600"/><path d="M9 18.500H16V30.500H9Z" fill="#f0b828" stroke="#7c7408" stroke-width="1.600"/><circle cx="12.500" cy="10.500" r="3" fill="#78d850" stroke="#7c7408" stroke-width="1.300"/><rect x="10.800" y="15" width="3.400" height="13" fill="#78d850"/><path d="M4 19.500h2.500v3M19 19.500h2.500v3" stroke="#7c7408" fill="none"/></svg>
<svg style="left:14px;top:734px" width="31" height="31" viewBox="0 0 31 31" ><circle cx="15" cy="15.500" r="14.800" fill="url(#gChrome2)"/><circle cx="15" cy="15.500" r="14.800" fill="none" stroke="#101010" stroke-width="0.900"/><circle cx="15" cy="15" r="11.800" fill="url(#gOrangeBall)"/><circle cx="15" cy="8" r="2.600" fill="#180800"/><path d="M11 12H17.500V21H19.500V23.500H10.500V21H12.800V14.500H11Z" fill="#180800"/></svg>
<svg style="left:14px;top:774px" width="31" height="31" viewBox="0 0 31 31" ><circle cx="15.500" cy="15.500" r="14.800" fill="url(#gCopper)" stroke="#806048" stroke-width="0.7"/><path d="M0.800 17.500A14.800 14.800 0 1 1 30 11.500L15.500 15.500Z" fill="url(#gLav)"/><path d="M0.800 17.500L15.500 15.500L30 11.500L30.300 15L15.500 15.500Z" fill="#fff" opacity="0.9"/><circle cx="15.500" cy="15.500" r="5.600" fill="#f0f0f8" stroke="#9090a8" stroke-width="0.6"/><circle cx="15.500" cy="15.500" r="3.600" fill="#7c90a8"/></svg>
<svg style="left:14px;top:814px" width="32" height="32" viewBox="0 0 32 32" ><circle cx="14" cy="14.500" r="13" fill="url(#gEarth)"/><path d="M5 9Q9 5 14 6Q12 10 8 12Q6 16 9 20Q6 19 4 15Z" fill="#38c8d0" opacity="0.7"/><path d="M16 5Q21 6 23 10Q20 11 18 9Z" fill="#38c8d0" opacity="0.7"/><circle cx="23" cy="22" r="7.400" fill="url(#gCopper)" stroke="#705038" stroke-width="0.6"/><path d="M15.700 23A7.400 7.400 0 1 1 30.200 20L23 22Z" fill="url(#gLav)"/><circle cx="23" cy="22" r="2.600" fill="#203878"/></svg>
<svg width="0" height="0" style="left:0;top:0"><defs><linearGradient id="gIE" x1="0" y1="0" x2="0.3" y2="1"><stop offset="0" stop-color="#68d0f8"/><stop offset="0.45" stop-color="#1c84d8"/><stop offset="1" stop-color="#0c3c98"/></linearGradient></defs></svg>
<svg style="left:12px;top:852px" width="34" height="33" viewBox="0 0 34 33" ><g transform="rotate(-32 17 17)"><ellipse cx="17" cy="17" rx="18.500" ry="7.500" fill="none" stroke="#e8b820" stroke-width="2"/></g><path d="M28.500 17.500A10 10 0 1 0 26 24.800" fill="none" stroke="url(#gIE)" stroke-width="6.500"/><path d="M9 17.800H30" stroke="#1c7cd0" stroke-width="4.200"/><path d="M10 10Q14 5.500 20 6" fill="none" stroke="#b8ecff" stroke-width="1.600" opacity="0.8"/><g transform="rotate(-32 17 17)"><path d="M-1.500 17A18.500 7.500 0 0 1 30 11.500" fill="none" stroke="#f0c830" stroke-width="2.200"/></g></svg>
<svg style="left:14px;top:893px" width="29" height="32" viewBox="0 0 29 32" ><path d="M2.500 5L19 3.500L27 24.500L20 26Z" fill="#70a0e0" opacity="0.85" stroke="#5078c0" stroke-width="0.6"/><path d="M2 5L19 3.500L20.500 27.500L3.500 30.500Z" fill="url(#gNote)" stroke="#5870c0" stroke-width="0.9"/><path d="M4 11L20 9M4 14L20 12M4 17L20 15M4 20L20 18M4 23L20 21M4 26L20 24" stroke="#e0f8ff" stroke-width="0.7" opacity="0.8"/><path d="M4.500 3v3.500M8 2.700v3.500M11.500 2.400v3.500M15 2.100v3.500M18.500 1.800v3.500" stroke="#e8b828" stroke-width="1.700" stroke-linecap="round"/></svg>
<svg style="left:140px;top:944px" width="5" height="8" viewBox="0 0 5 8" ><path d="M0 0L4.300 3.700L0 7.400Z" fill="#000"/></svg>
<svg style="left:203px;top:524px" width="24" height="24" viewBox="0 0 24 24" ><path d="M2 2.500L6 2L7 3.500L5.500 21L3 21.500Z" fill="url(#gFlap)"/><path d="M5.500 3.500L20 2.500L21 19L6 22Z" fill="#585858"/><path d="M8 5.500L18 4.500L21.500 8L22 20.500L9 22.500Z" fill="url(#gSilver)" stroke="#787878" stroke-width="0.5"/><rect x="10" y="8" width="5" height="5" fill="#4848a8"/><path d="M16.500 9h3.500M16.500 11.500h3.500M10.500 15.500h9.500M10.500 18h9.500" stroke="#a8a8a8" stroke-width="1"/></svg>
<svg style="left:203px;top:554px" width="24" height="24" viewBox="0 0 24 24" ><path d="M2 3.500L14 2L17 5.500L16 20.500L3 22Z" fill="url(#gSilver)" stroke="#787878" stroke-width="0.5"/><rect x="4" y="5.500" width="5.500" height="5" fill="#5858a8"/><path d="M4 14h6M4 17h5" stroke="#a0a0a0"/><circle cx="15.500" cy="13.500" r="7.600" fill="#404060"/><circle cx="15.500" cy="13.500" r="6.300" fill="#f0f0f8"/><path d="M15.500 13.500L12 10M15.500 13.500L19.500 15" stroke="#202040" stroke-width="1.200"/><circle cx="15.500" cy="8.500" r="0.700" fill="#4848c0"/><circle cx="15.500" cy="18.500" r="0.700" fill="#4848c0"/><circle cx="10.500" cy="13.500" r="0.700" fill="#4848c0"/><circle cx="20.500" cy="13.500" r="0.700" fill="#4848c0"/><path d="M12 4.500L14 2.500L16 4.500" fill="#b0b0b8"/></svg>
<svg style="left:203px;top:584px" width="24" height="24" viewBox="0 0 24 24" ><path d="M2 2.500L6 2L7 3.500L5.500 21L3 21.500Z" fill="url(#gFlap)"/><path d="M5.500 4L17 2.500L18 18L6 21Z" fill="#505050"/><path d="M3 10L11 3L17 9.500L9 17Z" fill="#c02870"/><path d="M7.500 9.500L22.500 11.500L20.500 21.500L5.500 19Z" fill="url(#gSky)" stroke="#d8d8d8" stroke-width="0.9"/></svg>
<svg style="left:203px;top:614px" width="24" height="24" viewBox="0 0 24 24" ><path d="M2 2.500L6 2L7 3.500L5.500 21L3 21.500Z" fill="url(#gFlap)"/><path d="M5.500 4L19 2.500L20 19L6 22Z" fill="#484848"/><rect x="8" y="9" width="14" height="11.500" fill="#5050c0" stroke="#282860" stroke-width="0.6"/><path d="M8 15.500H12L13 11L14.500 19.500L16 8L17.500 18L18.500 15H22" fill="none" stroke="#d8d8ff" stroke-width="1.200"/></svg>
<svg style="left:203px;top:644px" width="24" height="24" viewBox="0 0 24 24" ><path d="M2 5L14 3L15.500 17L3.500 19.500Z" fill="#404040" stroke="#909090" stroke-width="0.6"/><path d="M14 3L22 1.500L22.500 18L15.500 17Z" fill="#202020"/><path d="M4 7L12.500 5.500L13.500 15.500L5 17Z" fill="#585878"/><path d="M6.500 9L12 8L12.500 13.500L7 14.500Z" fill="#e0e0f0"/><path d="M5 20.500L14 19L17 21L8 23Z" fill="#383838" stroke="#808080" stroke-width="0.5"/></svg>
<svg style="left:203px;top:682px" width="24" height="24" viewBox="0 0 24 24" ><path d="M1.500 2L13 1.500L16 5L15 17L3 18Z" fill="#383838" stroke="#a0a0a0" stroke-width="0.6"/><circle cx="5" cy="7" r="1.300" fill="#e04848"/><circle cx="5" cy="12" r="1.300" fill="#e04848"/><path d="M3 9.500h5" stroke="#b0b0b0"/><g transform="translate(14.500,13)"><path d="M0 -8L1.800 -5.200L5.600 -5.600L5.200 -1.800L8 0L5.200 1.800L5.600 5.600L1.800 5.200L0 8L-1.800 5.200L-5.600 5.600L-5.200 1.800L-8 0L-5.200 -1.800L-5.600 -5.600L-1.800 -5.200Z" fill="#c0c0c8" stroke="#505058" stroke-width="0.7"/><circle r="3" fill="#6868a8" stroke="#404048" stroke-width="0.8"/><circle r="1.200" fill="#c8c8d8"/></g></svg>
<svg style="left:203px;top:712px" width="25" height="24" viewBox="0 0 25 24" ><circle cx="11" cy="12" r="10.500" fill="#484848"/><path d="M11 12V2.500A9.500 9.500 0 0 0 1.500 12Z" fill="#e84828"/><path d="M11 12V2.500A9.500 9.500 0 0 1 20.500 12Z" fill="#58b838"/><path d="M11 12V21.500A9.500 9.500 0 0 1 1.500 12Z" fill="#2888e0"/><path d="M11 12V21.500A9.500 9.500 0 0 0 20.500 12Z" fill="#f8c020"/><path d="M3 8Q8 3 16 5Q10 6 3 8Z" fill="#fff" opacity="0.5"/><path d="M12.500 14.500L16 20L23.500 8" fill="none" stroke="#28a828" stroke-width="3" stroke-linecap="round"/></svg>
<svg style="left:203px;top:742px" width="24" height="24" viewBox="0 0 24 24" ><path d="M5 14A8.500 8.500 0 0 1 19 6" fill="none" stroke="#a8a8e8" stroke-width="2.200"/><path d="M19 10A8.500 8.500 0 0 1 6 19.500" fill="none" stroke="#a8a8e8" stroke-width="2.200"/><path d="M21.500 4.500L18 9L15.500 4Z M3.500 21L7 16.500L9.500 21.500Z" fill="#a8a8e8"/><path d="M2 2L10 1.500L11 9.500L3 10.500Z" fill="#282828" stroke="#888" stroke-width="0.5"/><path d="M4 4L9 3.500L9.500 7.500L4.500 8.500Z" fill="#c8c8d8"/><path d="M10.500 13L19 9.500L23 14L14 19.500Z" fill="#303030" stroke="#a0a0a0" stroke-width="0.6"/><path d="M12.500 13.500L18 11.500L20 14.500L14.500 17Z" fill="#9090b8"/></svg>
<svg style="left:203px;top:772px" width="24" height="24" viewBox="0 0 24 24" ><path d="M7.500 1.500L13.500 1L15 9L9 10Z" fill="#f0f0f0" stroke="#888" stroke-width="0.6"/><path d="M1.500 10Q1.500 8 4 8L19 7Q22.500 7 22.500 10V15Q22.500 17 20 17L5 18Q1.500 18 1.500 15Z" fill="url(#gSilver)" stroke="#707078" stroke-width="0.7"/><path d="M6 11L18 10L18.500 13L6.500 14Z" fill="#404048"/><path d="M8 17L19 16L23 20L12 22.500Z" fill="#e8e8e8" stroke="#606060" stroke-width="0.6"/><path d="M11 19L18 18" stroke="#888"/></svg>
<svg width="0" height="0" style="left:0;top:0"><defs><linearGradient id="gRing" x1="0.1" y1="0.1" x2="0.9" y2="0.9"><stop offset="0" stop-color="#f0f0ff"/><stop offset="0.35" stop-color="#8888d8"/><stop offset="1" stop-color="#14146c"/></linearGradient><radialGradient id="gDkChrome" cx="0.3" cy="0.25" r="0.9"><stop offset="0" stop-color="#e8e8ec"/><stop offset="0.35" stop-color="#88888c"/><stop offset="0.7" stop-color="#2c2c30"/><stop offset="1" stop-color="#606068"/></radialGradient></defs></svg>
<svg style="left:203px;top:810px" width="24" height="24" viewBox="0 0 24 24" ><circle cx="11.500" cy="11.500" r="11" fill="url(#gRing)"/><circle cx="11.500" cy="11.500" r="8.400" fill="url(#gDkChrome)"/><path d="M8 8.500A3.400 3.400 0 1 1 13 11.300Q11.500 12.200 11.500 13.500" fill="none" stroke="#fff" stroke-width="2.500"/><ellipse cx="11.500" cy="16.500" rx="2.400" ry="1.900" fill="#fff"/></svg>
<svg style="left:203px;top:840px" width="24" height="24" viewBox="0 0 24 24" ><circle cx="9" cy="9" r="7.600" fill="url(#gLens)" fill-opacity="0.75" stroke="#6868b0" stroke-width="1.700"/><path d="M6.500 7A2.800 2.800 0 1 1 10.500 9.500Q9.500 10.300 9.500 11.500" fill="none" stroke="#8888b8" stroke-width="1.700"/><path d="M14.500 14.500L21 21" stroke="#5858a8" stroke-width="2.600" stroke-linecap="round"/><path d="M14.500 14.500L20.500 20.500" stroke="#c8c8f0" stroke-width="0.800"/></svg>
<svg style="left:203px;top:870px" width="24" height="24" viewBox="0 0 24 24" ><circle cx="11.500" cy="11.500" r="11" fill="url(#gRing)"/><circle cx="11.500" cy="11.500" r="8.400" fill="url(#gDkChrome)"/><path d="M8 6.500H15L12.500 11.500L15 16.500H8L10.500 11.500Z" fill="#c8c8d0" stroke="#38384c" stroke-width="0.800"/><path d="M7.500 6.300H15.500M7.500 16.800H15.500" stroke="#e0e0e8" stroke-width="1.300"/><path d="M9.500 15.500L11.500 13L13.500 15.500Z" fill="#484860"/></svg>
<svg style="left:372px;top:562px" width="4" height="7" viewBox="0 0 4 7" ><path d="M0 0L3.500 3.500L0 7Z" fill="#000"/></svg>
<svg style="left:372px;top:750px" width="4" height="7" viewBox="0 0 4 7" ><path d="M0 0L3.500 3.500L0 7Z" fill="#000"/></svg>
<svg style="left:149px;top:970px" width="24" height="24" viewBox="0 0 24 24" ><path d="M12.300 10.300A4.300 4.300 0 1 1 14.800 12.600L13 14.500H11.500V16H10V17.500H8.500L7 19.300H4.200V16.800Z" fill="#808000" stroke="#fff" stroke-width="1.700" stroke-linejoin="round"/><circle cx="16" cy="8" r="1.100" fill="#fff"/></svg>
<svg style="left:283px;top:970px" width="24" height="24" viewBox="0 0 24 24" ><circle cx="11.800" cy="11.800" r="6.300" fill="none" stroke="#fff" stroke-width="1.800"/><path d="M11.800 8.300V15" stroke="#fff" stroke-width="2"/></svg>
<svg style="left:6px;top:1003px" width="16" height="16" viewBox="0 0 16 16" ><path d="M1.500 3Q4 1 7 2.500L6 7.500Q3.500 6 0.800 7.500Z" fill="#e85028"/><path d="M8 2.800Q11 4.500 14.500 2.500L13.500 7.500Q10.500 9.500 7 7.800Z" fill="#58b038"/><path d="M0.600 8.800Q3.300 7 6 8.500L5 13.500Q2.500 12 0 13.500Z" fill="#2878d8"/><path d="M6.800 9Q10 10.800 13.300 8.800L12.300 13.500Q9 15.500 5.800 13.800Z" fill="#f8c020"/></svg>
<svg style="left:63px;top:1002px" width="17" height="18" viewBox="0 0 17 18" ><ellipse cx="8.500" cy="9" rx="7.300" ry="8" fill="#e01820"/><ellipse cx="8.500" cy="9" rx="3" ry="5.800" fill="#849ab2"/><path d="M3 4Q6 1 10 2" stroke="#ff8080" stroke-width="1" fill="none" opacity="0.7"/></svg>
<svg style="left:225px;top:1002px" width="18" height="16" viewBox="0 0 18 16" ><circle cx="6.8" cy="6.3" r="5.9" fill="url(#gBlueBall)" stroke="#202878" stroke-width="0.7"/><path d="M2.5 4.5Q5 2 8 3Q7 5 4.5 5.5Z" fill="#fff" opacity="0.55"/><g transform="translate(11.6,10.8) rotate(45)"><rect x="-3.4" y="-2.8" width="6.8" height="5.6" fill="#f4f4f0" stroke="#181868" stroke-width="1"/><rect x="-1.2" y="-0.2" width="2.4" height="2" fill="#2838c8"/></g></svg>
<svg style="left:1011px;top:1004px" width="8" height="6" viewBox="0 0 8 6" ><path d="M0.800 0.500L3 3L0.800 5.500M4.800 0.500L7 3L4.800 5.500" fill="none" stroke="#000" stroke-width="1.200"/></svg>
<svg style="left:1065px;top:1004px" width="8" height="6" viewBox="0 0 8 6" ><path d="M0.800 0.500L3 3L0.800 5.500M4.800 0.500L7 3L4.800 5.500" fill="none" stroke="#000" stroke-width="1.200"/></svg>
<svg style="left:1081px;top:1008px" width="8" height="6" viewBox="0 0 8 6" ><path d="M3.200 0.500L1 3L3.200 5.500M7.200 0.500L5 3L7.200 5.500" fill="none" stroke="#000" stroke-width="1.200"/></svg>
<svg style="left:1093px;top:1003px" width="17" height="16" viewBox="0 0 17 16" ><path d="M8 8Q4 0 0.500 3Q2 9 6 10.500Q3 12 4.500 15.500Q8 14 8 8Z" fill="#f08820"/><path d="M8.500 8Q12.500 0 16.500 3Q15 9 11 10.500Q14 12 12.500 15.500Q9 14 8.500 8Z" fill="#68c030"/></svg>
<svg style="left:1112px;top:1003px" width="16" height="16" viewBox="0 0 16 16" ><rect x="0.500" y="0.500" width="15" height="15" rx="3" fill="#181818" stroke="#686868"/><path d="M8 14.500L5 10Q3 4.500 8 2.500Q13 4.500 11 10Z" fill="#f0f0f0"/><path d="M5.500 7.500L7.300 9.500M10.500 7.500L8.700 9.500" stroke="#181818" stroke-width="1.300"/></svg>
<svg style="left:1130px;top:1003px" width="17" height="17" viewBox="0 0 17 17" ><rect x="6.500" y="0.500" width="9" height="7.500" fill="#58a8f0" stroke="#d8e8f8" stroke-width="1"/><rect x="1" y="5" width="9.500" height="8" fill="#3888e0" stroke="#d8e8f8" stroke-width="1"/><path d="M3 15.500H9M11 10.500H15" stroke="#d0d0e0" stroke-width="1.500"/><path d="M5.500 13V15M12.500 8V10.500" stroke="#9090a8" stroke-width="1.200"/></svg>
<svg style="left:1148px;top:1003px" width="18" height="17" viewBox="0 0 18 17" ><circle cx="7" cy="7" r="6.500" fill="#f0d040" stroke="#a08818" stroke-width="0.700"/><path d="M2.500 5Q5 2 9 3Q6 4.500 2.500 5Z" fill="#fff" opacity="0.6"/><g transform="translate(11.500,11.500) rotate(45)"><rect x="-3.500" y="-3" width="7" height="6" fill="#f4f4f4" stroke="#2838a0" stroke-width="1"/><rect x="-1.200" y="0" width="2.400" height="2" fill="#2838c8"/></g></svg>
<svg style="left:1166px;top:1003px" width="16" height="16" viewBox="0 0 16 16" ><rect x="0.500" y="0.500" width="15" height="15" fill="#fff" stroke="#d0e8d0" stroke-width="1"/><rect x="2" y="2" width="12" height="12" fill="#10a028"/><text x="4.300" y="11.500" font-family="Liberation Sans" font-weight="bold" font-size="11" fill="#fff">µ</text></svg>
<svg style="left:1185px;top:1004px" width="16" height="15" viewBox="0 0 16 15" ><rect x="0.500" y="0.500" width="14.500" height="13.500" rx="2" fill="#e4e4e4" stroke="#b0b0b0" stroke-width="0.800"/><circle cx="6" cy="7" r="3.800" fill="none" stroke="#505050" stroke-width="1"/><circle cx="9.500" cy="7" r="3.800" fill="none" stroke="#707070" stroke-width="1"/><path d="M4 7h8" stroke="#606060" stroke-width="0.800"/></svg>
<svg style="left:1202px;top:1003px" width="17" height="16" viewBox="0 0 17 16" ><rect width="17" height="16" fill="#800000"/><text x="1.200" y="12.500" font-family="Liberation Sans" font-size="12" fill="#fff" textLength="14.500">En</text></svg>
<svg style="left:1220px;top:1003px" width="17" height="16" viewBox="0 0 17 16" ><rect width="17" height="16" rx="1.500" fill="#e01020"/><path d="M2 11Q2.500 3 9 3Q13.500 3.500 13 8Q10.500 6 8.500 8L13.500 14.500" fill="none" stroke="#fff" stroke-width="2"/><path d="M2 11Q5 9 8.500 8" fill="none" stroke="#fff" stroke-width="1.500"/></svg>
<svg style="left:1199px;top:978px" width="18" height="18" viewBox="0 0 18 18" ><rect x="1.500" y="7.500" width="10" height="8.500" rx="1" fill="#f0c848" stroke="#a88020" stroke-width="1"/><path d="M2 10.500h9M2 13h9" stroke="#d8a830" stroke-width="0.800"/><path d="M9.500 7.500V4.500A3 3 0 0 1 15.500 4.500V6.500" fill="none" stroke="#e8e8e8" stroke-width="1.800"/></svg>
<svg style="left:1056px;top:959px" width="7" height="4" viewBox="0 0 7 4" ><path d="M0 0H7L3.500 3.500Z" fill="#000"/></svg>
<svg style="left:1263px;top:959px" width="7" height="4" viewBox="0 0 7 4" ><path d="M0 0H7L3.500 3.500Z" fill="#000"/></svg>
</div></body></html>
